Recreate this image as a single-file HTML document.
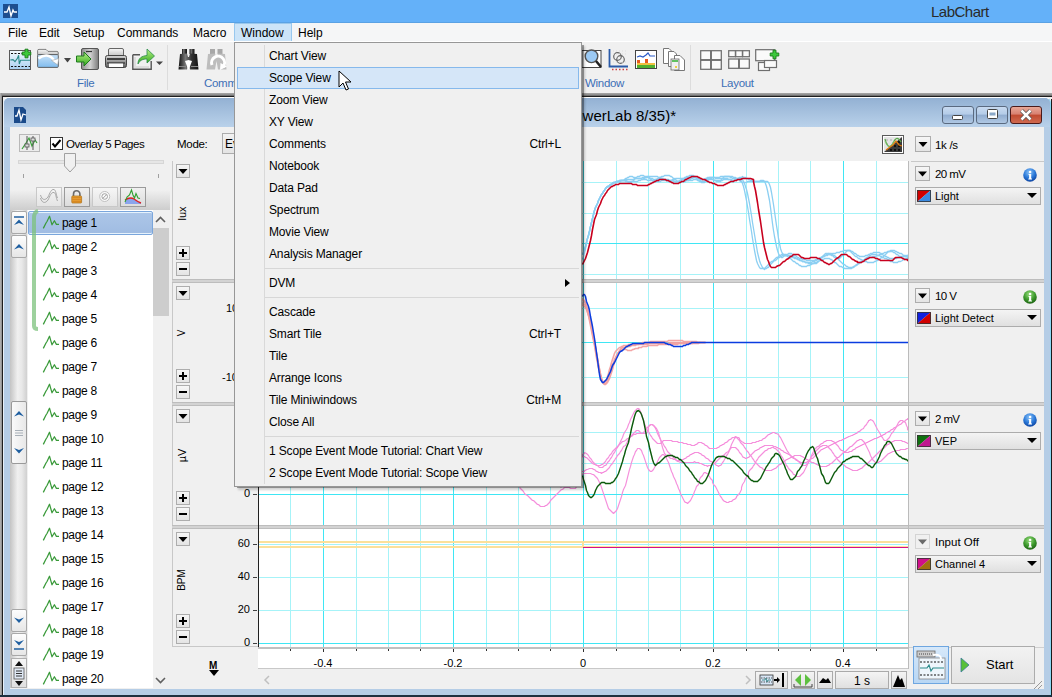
<!DOCTYPE html>
<html><head><meta charset="utf-8">
<style>
*{margin:0;padding:0;box-sizing:border-box}
html,body{width:1052px;height:697px;overflow:hidden;background:#f0f0f0;font-family:"Liberation Sans",sans-serif;font-size:12px;color:#000}
.a{position:absolute}
.t{position:absolute;white-space:nowrap;line-height:1}
svg{position:absolute;overflow:visible}
</style></head><body>
<!-- title bar -->
<div class="a" style="left:0;top:0;width:1052px;height:23px;background:#64b1f9"></div>
<div class="a" style="left:3px;top:4px;width:15px;height:14px;background:#1d4e8f"></div>
<svg style="left:3px;top:4px" width="15" height="14"><path d="M1 8 L4 8 L6 3 L8 12 L10 6 L11 8 L14 8" stroke="#fff" stroke-width="1.3" fill="none"/></svg>
<div class="t" style="left:931px;top:4px;font-size:15px;letter-spacing:-0.5px;color:#2a2a2a">LabChart</div><div class="a" style="left:0;top:22px;width:1052px;height:1px;background:#5aa2e4"></div>
<!-- menu bar -->
<div class="a" style="left:0;top:23px;width:1052px;height:18px;background:#f5f6f7"></div>
<div class="a" style="left:234px;top:23px;width:58px;height:19px;background:#cce4f8;border:1px solid #99c8ee"></div>
<div class="t" style="left:8px;top:27px">File</div>
<div class="t" style="left:39px;top:27px">Edit</div>
<div class="t" style="left:73px;top:27px">Setup</div>
<div class="t" style="left:117px;top:27px">Commands</div>
<div class="t" style="left:193px;top:27px">Macro</div>
<div class="t" style="left:241px;top:27px">Window</div>
<div class="t" style="left:298px;top:27px">Help</div>
<!-- toolbar -->
<div class="a" style="left:0;top:41px;width:1052px;height:52px;background:#f0f0f0;border-top:1px solid #fff"></div>
<div class="a" style="left:167px;top:45px;width:1px;height:45px;background:#dcdcdc"></div>
<div class="a" style="left:690px;top:45px;width:1px;height:45px;background:#dcdcdc"></div>
<div class="t" style="left:77px;top:78px;color:#3d6fb6;font-size:11.5px;letter-spacing:-0.3px">File</div>
<div class="t" style="left:204px;top:78px;color:#3d6fb6;font-size:11.5px;letter-spacing:-0.3px">Commands</div>
<div class="t" style="left:585px;top:78px;color:#3d6fb6;font-size:11.5px;letter-spacing:-0.3px">Window</div>
<div class="t" style="left:721px;top:78px;color:#3d6fb6;font-size:11.5px;letter-spacing:-0.3px">Layout</div>
<!-- MDI border -->
<div class="a" style="left:0;top:93px;width:1052px;height:4px;background:linear-gradient(#a8a8a8 0%,#8a8a8a 50%,#5a5a5a 75%,#1e1e1e 76%)"></div>
<div class="a" style="left:0;top:93px;width:2px;height:604px;background:linear-gradient(90deg,#b8b8b8,#8a8a8a)"></div><div class="a" style="left:2px;top:96px;width:1px;height:601px;background:#1e1e1e"></div>
<div class="a" style="left:1051px;top:99px;width:1px;height:598px;background:#1a1a1a"></div>
<!-- child window frame -->
<div class="a" style="left:3px;top:97px;width:1048px;height:598px;background:#b5cde6;border-top:1px solid #fff;border-left:1px solid #e8f0f8;border-right:1px solid #8ad8f4;border-radius:6px 6px 0 0"></div>
<div class="a" style="left:4px;top:98px;width:1046px;height:29px;background:linear-gradient(#93b1d3,#b9d1ea);border-radius:5px 5px 0 0"></div>
<div class="a" style="left:0;top:695px;width:1052px;height:2px;background:#1d3040"></div>
<div class="a" style="left:10px;top:127px;width:1034px;height:562px;background:#f0f0f0"></div>
<svg style="left:9px;top:49px" width="24" height="21"><defs><linearGradient id="g1" x1="0" y1="0" x2="0" y2="1"><stop offset="0" stop-color="#f4faff"/><stop offset="1" stop-color="#a8d0f0"/></linearGradient></defs>
<rect x=".5" y="1.5" width="21" height="19" fill="url(#g1)" stroke="#5a5a5a"/>
<path d="M2 4.5h12M2 17.5h19" stroke="#111" stroke-dasharray="2 1.5"/>
<path d="M1.3 11 L4 10.6 L6 12.6 L8.3 9.6 L9.6 6.3 L10.3 15 L11.6 11.3 L21 11.3" stroke="#2a8a8a" stroke-width="1.1" fill="none"/>
<path d="M16 0.2 H19 V3 H21.8 V6 H19 V8.8 H16 V6 H13.2 V3 H16 Z" fill="#3cc83c" stroke="#1a7a1a" stroke-width=".9"/></svg>
<svg style="left:37px;top:49px" width="23" height="19"><defs><linearGradient id="g2" x1="0" y1="0" x2="0" y2="1"><stop offset="0" stop-color="#c8e2f8"/><stop offset="1" stop-color="#80bcee"/></linearGradient><linearGradient id="g2b" x1="0" y1="0" x2="0" y2="1"><stop offset="0" stop-color="#f4f4f4"/><stop offset="1" stop-color="#c8c8c8"/></linearGradient></defs>
<path d="M.6 5.6 V1.5 Q.6 .4 2 .4 H9 L11 2.4 H20 Q21.3 2.4 21.3 4 V5.6Z" fill="url(#g2b)" stroke="#666" stroke-width=".8"/>
<rect x=".6" y="5.6" width="20.7" height="12.8" rx="1" fill="url(#g2)" stroke="#555" stroke-width=".9"/>
<path d="M1.5 9.5 C7 5,13 5.5,17 11" stroke="#fff" stroke-width="2.4" fill="none"/><path d="M14.5 11.5 L21.8 9.6 L20.6 15.8Z" fill="#fff" stroke="#999" stroke-width=".5"/></svg>
<svg style="left:64px;top:58px" width="8" height="5"><path d="M0 0H7L3.5 4.5Z" fill="#444"/></svg>
<svg style="left:76px;top:48px" width="23" height="22"><defs><linearGradient id="g3" x1="0" y1="0" x2="1" y2="0"><stop offset="0" stop-color="#8a8a8a"/><stop offset=".5" stop-color="#d4d4d4"/><stop offset="1" stop-color="#7a7a7a"/></linearGradient><linearGradient id="g4" x1="0" y1="0" x2="0" y2="1"><stop offset="0" stop-color="#b8f088"/><stop offset="1" stop-color="#30a818"/></linearGradient></defs>
<rect x="5.5" y=".5" width="17" height="21" rx="1.5" fill="url(#g3)" stroke="#555"/>
<path d="M10 3.5h6" stroke="#333" stroke-width="1.2"/>
<path d="M.5 8 H8 V4 L15 11 L8 18 V14 H.5Z" fill="url(#g4)" stroke="#1e7a1e"/></svg>
<svg style="left:105px;top:48px" width="22" height="21"><defs><linearGradient id="g5" x1="0" y1="0" x2="0" y2="1"><stop offset="0" stop-color="#d8d8d8"/><stop offset=".5" stop-color="#9a9a9a"/><stop offset="1" stop-color="#5a5a5a"/></linearGradient><linearGradient id="g5b" x1="0" y1="0" x2="0" y2="1"><stop offset="0" stop-color="#f8f8f8"/><stop offset="1" stop-color="#c0c0c0"/></linearGradient></defs>
<rect x="3.5" y=".5" width="15" height="8" rx="1.5" fill="url(#g5b)" stroke="#666"/>
<rect x=".5" y="7.5" width="21" height="12" rx="2" fill="url(#g5)" stroke="#444"/>
<path d="M2 11h18" stroke="#222" stroke-width="1.6"/><path d="M2 15h18" stroke="#333" stroke-width="1.2"/>
<rect x="4" y="15.5" width="14" height="3.5" fill="#fff"/></svg>
<svg style="left:132px;top:48px" width="32" height="23"><defs><linearGradient id="g6" x1="0" y1="0" x2="0" y2="1"><stop offset="0" stop-color="#b8f08a"/><stop offset="1" stop-color="#30a818"/></linearGradient></defs>
<path d="M.8 6.8 H8 V6.8 M.8 6.8 V21.2 H19.2 V13" stroke="#555" stroke-width="1.4" fill="none"/><path d="M3 9 V19 H17" stroke="#ddd" stroke-width="2" fill="none"/>
<path d="M6 16 C6 10,10 8,15 7.5 V1 L22.5 8 L15 15 V11 C11 11,8 12,6 16Z" fill="url(#g6)" stroke="#2a8a4a" stroke-width=".8"/>
<path d="M24 13.5H31L27.5 17Z" fill="#444"/></svg>
<svg style="left:178px;top:48px" width="21" height="22"><defs><linearGradient id="g7" x1="0" y1="0" x2="1" y2="0"><stop offset="0" stop-color="#111"/><stop offset=".35" stop-color="#777"/><stop offset=".65" stop-color="#333"/><stop offset="1" stop-color="#111"/></linearGradient></defs>
<rect x="4" y="1" width="5" height="5" fill="url(#g7)"/><rect x="11.5" y="1" width="5" height="5" fill="url(#g7)"/>
<path d="M0.5 21.5 L2 6 L9 5.5 L10 9 L11 9 L12 5.5 L19 6 L20.5 21.5 H12 L10.5 13 L9 21.5Z" fill="url(#g7)"/>
<path d="M7 13 L10.5 12 L14 13 L11 21 H10Z" fill="#fff"/><path d="M1 18.5h7M13 18.5h7" stroke="#888" stroke-width="1"/></svg>
<svg style="left:206px;top:48px" width="22" height="23"><rect x="4" y="1" width="5" height="5" fill="#a8a8a8"/><rect x="11.5" y="1" width="5" height="5" fill="#a8a8a8"/>
<path d="M0.5 21.5 L2 6 L9 5.5 L10 9 L11 9 L12 5.5 L19 6 L20.5 21.5 H12 L10.5 13 L9 21.5Z" fill="#bdbdbd"/>
<path d="M6 17 A6.5 6.5 0 1 1 17 19" stroke="#fff" stroke-width="3" fill="none"/><path d="M14 22 L21 18.5 L14.5 15Z" fill="#fff"/></svg>
<svg style="left:582px;top:50px" width="20" height="20"><rect x="0" y=".5" width="19" height="17" fill="#fff" stroke="#444"/><circle cx="9.5" cy="6.3" r="6.3" fill="#9ccaf4" stroke="#555" stroke-width="1.4"/><path d="M14 11 L19 17" stroke="#222" stroke-width="2.5"/></svg>
<svg style="left:608px;top:48px" width="21" height="23"><path d="M1.5 1 V18.5 H20" stroke="#2a5aa8" stroke-width="1.8" fill="none"/><path d="M4 21.5h16" stroke="#d04040" stroke-dasharray="1.5 2" stroke-width="1.5"/>
<circle cx="9.5" cy="8.5" r="3.8" fill="none" stroke="#666" stroke-width="1.2"/><circle cx="12.5" cy="11.5" r="3.8" fill="none" stroke="#666" stroke-width="1.2"/>
<path d="M5 3h14M5 6h14M5 14h14" stroke="#ddd" stroke-dasharray="1 2"/></svg>
<svg style="left:635px;top:50px" width="22" height="19"><rect x=".5" y=".5" width="21" height="18" fill="#fff" stroke="#444"/>
<path d="M2 7 L5 6 L8 7 L11 5 L13 3 L15 6 L20 6" stroke="#2a5ac8" stroke-width="1.2" fill="none"/>
<rect x="2" y="10" width="3" height="3" fill="#e85a20"/><rect x="10" y="9" width="3" height="4" fill="#e85a20"/><rect x="2" y="13" width="18" height="2" fill="#f0c040"/><rect x="2" y="15" width="18" height="3" fill="#50b030"/></svg>
<svg style="left:663px;top:48px" width="23" height="23"><path d="M.5 .5 H6 L8.5 3 V15.5 H.5Z" fill="#fff" stroke="#777"/><path d="M5.5 3.5 H11 L13.5 6 V18.5 H5.5Z" fill="#fff" stroke="#777"/><path d="M11.5 7.5 H17 L21.5 12 V22.5 H11.5Z" fill="#fff" stroke="#777"/>
<rect x="8" y="11" width="8" height="11" fill="#f0f0f0" stroke="#666" stroke-width=".8"/><rect x="9" y="12" width="6" height="2" fill="#60c060"/><rect x="12" y="18" width="2" height="2" fill="#f0d040"/></svg>
<svg style="left:700px;top:50px" width="22" height="20"><g fill="#fafafa" stroke="#6e6e6e" stroke-width="1.25"><rect x=".7" y=".7" width="10" height="9"/><rect x="11.3" y=".7" width="10" height="9"/><rect x=".7" y="10.3" width="10" height="9"/><rect x="11.3" y="10.3" width="10" height="9"/></g></svg>
<svg style="left:728px;top:50px" width="22" height="19"><g fill="#fafafa" stroke="#6e6e6e" stroke-width="1.25"><rect x=".7" y=".7" width="6.7" height="6"/><rect x="7.7" y=".7" width="6.7" height="6"/><rect x="14.7" y=".7" width="6.7" height="6"/><rect x=".7" y="9" width="10" height="9.3"/><rect x="11.3" y="9" width="10" height="9.3"/></g></svg>
<svg style="left:755px;top:49px" width="26" height="22"><g fill="#fafafa" stroke="#6e6e6e" stroke-width="1.2"><rect x=".7" y=".7" width="19" height="11"/><rect x="3.5" y="13.5" width="11" height="8"/><rect x="9.5" y="11.5" width="12" height="7"/></g>
<path d="M18 1.2 H21 V4 H23.8 V7 H21 V9.8 H18 V7 H15.2 V4 H18 Z" fill="#3cc83c" stroke="#1a7a1a" stroke-width=".9"/></svg>
<svg style="left:14px;top:107px" width="12" height="16"><path d="M0 0 H9 L12 3 V16 H0Z" fill="#1a4a8a"/><path d="M1 9 L3 9 L5 3 L7 13 L9 7 L12 8" stroke="#fff" stroke-width="1.3" fill="none"/></svg>
<div class="t" style="right:376px;top:108px;font-size:15px;color:#000">Scope Event Mode Tutorial: Scope View (PowerLab 8/35)*</div>
<div class="a" style="left:942px;top:106px;width:32px;height:18px;border:1px solid #5a6a80;border-radius:3px;background:linear-gradient(#c8daf0 0%,#b4cce8 45%,#90acd0 50%,#b0c8e4 100%)"></div>
<svg style="left:942px;top:106px" width="32" height="18"><rect x="10.5" y="9.5" width="10" height="4" rx="1" fill="#fff" stroke="#444"/></svg>
<div class="a" style="left:976px;top:106px;width:32px;height:18px;border:1px solid #5a6a80;border-radius:3px;background:linear-gradient(#c8daf0 0%,#b4cce8 45%,#90acd0 50%,#b0c8e4 100%)"></div>
<svg style="left:976px;top:106px" width="32" height="18"><rect x="11.5" y="3.5" width="10" height="9" rx="1" fill="#fff" stroke="#444"/><rect x="13.5" y="6.5" width="6" height="3" fill="#8aa8c8"/></svg>
<div class="a" style="left:1010px;top:106px;width:32px;height:18px;border:1px solid #4a1a1a;border-radius:3px;background:linear-gradient(#e8a898 0%,#d88070 45%,#c04a30 50%,#d06a50 100%)"></div>
<svg style="left:1010px;top:106px" width="32" height="18"><path d="M11.5 4.5 L20.5 13.5 M20.5 4.5 L11.5 13.5" stroke="#555" stroke-width="4"/><path d="M11.5 4.5 L20.5 13.5 M20.5 4.5 L11.5 13.5" stroke="#fff" stroke-width="2.5"/></svg><div class="a" style="left:19px;top:134px;width:21px;height:18px;background:#ececec;border:1px solid #b8b8b8"></div>
<svg style="left:19px;top:134px" width="21" height="18"><path d="M3 15 L7 9 L10 4 L13 12 L16 6 L18 9" stroke="#3aa03a" stroke-width="1.2" fill="none"/><path d="M8 2 V16 M14 2 V16" stroke="#555" stroke-width="1"/><rect x="6" y="10" width="4" height="3" fill="#ddd" stroke="#555" stroke-width=".8"/><rect x="12" y="4" width="4" height="3" fill="#ddd" stroke="#555" stroke-width=".8"/></svg>
<div class="a" style="left:50px;top:137px;width:13px;height:13px;background:#fff;border:1px solid #333"></div>
<svg style="left:50px;top:137px" width="13" height="13"><path d="M2.5 6.5 L5 9.5 L10.5 3" stroke="#000" stroke-width="2" fill="none"/></svg>
<div class="t" style="left:66px;top:139px;font-size:11.5px;letter-spacing:-0.45px">Overlay 5 Pages</div>
<div class="a" style="left:18px;top:160px;width:146px;height:4px;background:#e6e6e6;border:1px solid #d6d6d6"></div>
<svg style="left:64px;top:153px" width="13" height="21"><path d="M0.5 0.5 H11.5 V13 L6 19 L0.5 13 Z" fill="#f0f0f0" stroke="#a0a0a0"/></svg>
<div class="a" style="left:23px;top:174px;width:1px;height:4px;background:#a0a0a0"></div>
<div class="a" style="left:158px;top:174px;width:1px;height:4px;background:#a0a0a0"></div>
<div class="a" style="left:10px;top:190px;width:160px;height:20px;background:linear-gradient(#f0f0f0,#cdcdcd)"></div>
<div class="a" style="left:36px;top:187px;width:26px;height:20px;background:linear-gradient(#f6f6f6,#e4e4e4);border:1px solid #c8c8c8"></div>
<div class="a" style="left:64px;top:187px;width:26px;height:20px;background:linear-gradient(#f0f0f0,#dcdcdc);border:1px solid #9a9a9a"></div>
<div class="a" style="left:92px;top:187px;width:26px;height:20px;background:linear-gradient(#f6f6f6,#e4e4e4);border:1px solid #c8c8c8"></div>
<div class="a" style="left:120px;top:187px;width:26px;height:20px;background:linear-gradient(#f0f0f0,#dcdcdc);border:1px solid #9a9a9a"></div>
<svg style="left:36px;top:187px" width="26" height="20"><path d="M4.5 8 C6 13,9 14,12 10 C14 6,15 2,18 2.5 C20 3,20 8,21.5 11" stroke="#a8a8a8" stroke-width="1" fill="none"/><path d="M4.5 11 C6 16,9 17,12 13 C14 9,15 5,18 5.5 C20 6,20 11,21.5 14" stroke="#a8a8a8" stroke-width="1" fill="none"/></svg>
<svg style="left:64px;top:187px" width="26" height="20"><path d="M9.5 9.5 V7 a3.2 3.2 0 0 1 6.4 0 V9.5" stroke="#6a6a6a" stroke-width="1.6" fill="none"/><rect x="7.8" y="9" width="9.8" height="7" rx=".8" fill="#f0a838" stroke="#a86a10" stroke-width=".7"/><path d="M8.3 10.8h8.8M8.3 12.8h8.8M8.3 14.8h8.8" stroke="#c06a10" stroke-width=".7"/></svg>
<svg style="left:92px;top:187px" width="26" height="20"><circle cx="12.7" cy="9.5" r="5" fill="#fafafa" stroke="#c0c0c0" stroke-width="1"/><circle cx="12.7" cy="9.5" r="2.8" fill="none" stroke="#999" stroke-width=".9"/><path d="M11 11.2 L14.4 7.8" stroke="#999" stroke-width=".9"/></svg>
<svg style="left:120px;top:187px" width="26" height="20"><path d="M5 17 V13 C8 11,11 10,14 12 C16 13.5,18 15,21 16 V17Z" fill="#8aa4ec"/><path d="M5 13 C8 11,11 10,14 12 C16 13.5,18 15,21 16" stroke="#e02020" stroke-width="1.4" fill="none"/><path d="M5 15 L7 10 L9.5 8 L11.5 3 L13 8 L14.5 11 L16 6.5 L18 11 L20 11.5" stroke="#30a030" stroke-width="1.1" fill="none"/></svg>
<div class="a" style="left:28px;top:210px;width:125px;height:478px;background:#fff"></div>
<div class="a" style="left:28px;top:211px;width:125px;height:24px;background:linear-gradient(#acc6e8,#a0bce2);border:1px solid #7aa6dc;box-shadow:inset 0 1px 0 #e6f2fc,inset 0 -1px 0 #e6f2fc;border-radius:2px"></div>
<svg style="left:28px;top:208px" width="20" height="125"><path d="M10 3 Q6 4,6 10 V118 Q6 121,10 121" stroke="#7cc27c" stroke-width="4" fill="none" opacity=".75"/></svg>
<svg style="left:43px;top:214px" width="17" height="17"><path d="M0.3 14.4 L3 9 L4 7.5 L6.5 2.2 L9 10.8 L11.4 6.7 L13.4 10.4 L16 10.4" stroke="#3a9a3a" stroke-width="1.25" fill="none" stroke-linejoin="round"/></svg>
<div class="t" style="left:62px;top:217px;font-size:12px;letter-spacing:-0.3px;color:#000">page 1</div>
<svg style="left:43px;top:238px" width="17" height="17"><path d="M0.3 14.4 L3 9 L4 7.5 L6.5 2.2 L9 10.8 L11.4 6.7 L13.4 10.4 L16 10.4" stroke="#3a9a3a" stroke-width="1.25" fill="none" stroke-linejoin="round"/></svg>
<div class="t" style="left:62px;top:241px;font-size:12px;letter-spacing:-0.3px;color:#000">page 2</div>
<svg style="left:43px;top:262px" width="17" height="17"><path d="M0.3 14.4 L3 9 L4 7.5 L6.5 2.2 L9 10.8 L11.4 6.7 L13.4 10.4 L16 10.4" stroke="#3a9a3a" stroke-width="1.25" fill="none" stroke-linejoin="round"/></svg>
<div class="t" style="left:62px;top:265px;font-size:12px;letter-spacing:-0.3px;color:#000">page 3</div>
<svg style="left:43px;top:286px" width="17" height="17"><path d="M0.3 14.4 L3 9 L4 7.5 L6.5 2.2 L9 10.8 L11.4 6.7 L13.4 10.4 L16 10.4" stroke="#3a9a3a" stroke-width="1.25" fill="none" stroke-linejoin="round"/></svg>
<div class="t" style="left:62px;top:289px;font-size:12px;letter-spacing:-0.3px;color:#000">page 4</div>
<svg style="left:43px;top:310px" width="17" height="17"><path d="M0.3 14.4 L3 9 L4 7.5 L6.5 2.2 L9 10.8 L11.4 6.7 L13.4 10.4 L16 10.4" stroke="#3a9a3a" stroke-width="1.25" fill="none" stroke-linejoin="round"/></svg>
<div class="t" style="left:62px;top:313px;font-size:12px;letter-spacing:-0.3px;color:#000">page 5</div>
<svg style="left:43px;top:334px" width="17" height="17"><path d="M0.3 14.4 L3 9 L4 7.5 L6.5 2.2 L9 10.8 L11.4 6.7 L13.4 10.4 L16 10.4" stroke="#3a9a3a" stroke-width="1.25" fill="none" stroke-linejoin="round"/></svg>
<div class="t" style="left:62px;top:337px;font-size:12px;letter-spacing:-0.3px;color:#000">page 6</div>
<svg style="left:43px;top:358px" width="17" height="17"><path d="M0.3 14.4 L3 9 L4 7.5 L6.5 2.2 L9 10.8 L11.4 6.7 L13.4 10.4 L16 10.4" stroke="#3a9a3a" stroke-width="1.25" fill="none" stroke-linejoin="round"/></svg>
<div class="t" style="left:62px;top:361px;font-size:12px;letter-spacing:-0.3px;color:#000">page 7</div>
<svg style="left:43px;top:382px" width="17" height="17"><path d="M0.3 14.4 L3 9 L4 7.5 L6.5 2.2 L9 10.8 L11.4 6.7 L13.4 10.4 L16 10.4" stroke="#3a9a3a" stroke-width="1.25" fill="none" stroke-linejoin="round"/></svg>
<div class="t" style="left:62px;top:385px;font-size:12px;letter-spacing:-0.3px;color:#000">page 8</div>
<svg style="left:43px;top:406px" width="17" height="17"><path d="M0.3 14.4 L3 9 L4 7.5 L6.5 2.2 L9 10.8 L11.4 6.7 L13.4 10.4 L16 10.4" stroke="#3a9a3a" stroke-width="1.25" fill="none" stroke-linejoin="round"/></svg>
<div class="t" style="left:62px;top:409px;font-size:12px;letter-spacing:-0.3px;color:#000">page 9</div>
<svg style="left:43px;top:430px" width="17" height="17"><path d="M0.3 14.4 L3 9 L4 7.5 L6.5 2.2 L9 10.8 L11.4 6.7 L13.4 10.4 L16 10.4" stroke="#3a9a3a" stroke-width="1.25" fill="none" stroke-linejoin="round"/></svg>
<div class="t" style="left:62px;top:433px;font-size:12px;letter-spacing:-0.3px;color:#000">page 10</div>
<svg style="left:43px;top:454px" width="17" height="17"><path d="M0.3 14.4 L3 9 L4 7.5 L6.5 2.2 L9 10.8 L11.4 6.7 L13.4 10.4 L16 10.4" stroke="#3a9a3a" stroke-width="1.25" fill="none" stroke-linejoin="round"/></svg>
<div class="t" style="left:62px;top:457px;font-size:12px;letter-spacing:-0.3px;color:#000">page 11</div>
<svg style="left:43px;top:478px" width="17" height="17"><path d="M0.3 14.4 L3 9 L4 7.5 L6.5 2.2 L9 10.8 L11.4 6.7 L13.4 10.4 L16 10.4" stroke="#3a9a3a" stroke-width="1.25" fill="none" stroke-linejoin="round"/></svg>
<div class="t" style="left:62px;top:481px;font-size:12px;letter-spacing:-0.3px;color:#000">page 12</div>
<svg style="left:43px;top:502px" width="17" height="17"><path d="M0.3 14.4 L3 9 L4 7.5 L6.5 2.2 L9 10.8 L11.4 6.7 L13.4 10.4 L16 10.4" stroke="#3a9a3a" stroke-width="1.25" fill="none" stroke-linejoin="round"/></svg>
<div class="t" style="left:62px;top:505px;font-size:12px;letter-spacing:-0.3px;color:#000">page 13</div>
<svg style="left:43px;top:526px" width="17" height="17"><path d="M0.3 14.4 L3 9 L4 7.5 L6.5 2.2 L9 10.8 L11.4 6.7 L13.4 10.4 L16 10.4" stroke="#3a9a3a" stroke-width="1.25" fill="none" stroke-linejoin="round"/></svg>
<div class="t" style="left:62px;top:529px;font-size:12px;letter-spacing:-0.3px;color:#000">page 14</div>
<svg style="left:43px;top:550px" width="17" height="17"><path d="M0.3 14.4 L3 9 L4 7.5 L6.5 2.2 L9 10.8 L11.4 6.7 L13.4 10.4 L16 10.4" stroke="#3a9a3a" stroke-width="1.25" fill="none" stroke-linejoin="round"/></svg>
<div class="t" style="left:62px;top:553px;font-size:12px;letter-spacing:-0.3px;color:#000">page 15</div>
<svg style="left:43px;top:574px" width="17" height="17"><path d="M0.3 14.4 L3 9 L4 7.5 L6.5 2.2 L9 10.8 L11.4 6.7 L13.4 10.4 L16 10.4" stroke="#3a9a3a" stroke-width="1.25" fill="none" stroke-linejoin="round"/></svg>
<div class="t" style="left:62px;top:577px;font-size:12px;letter-spacing:-0.3px;color:#000">page 16</div>
<svg style="left:43px;top:598px" width="17" height="17"><path d="M0.3 14.4 L3 9 L4 7.5 L6.5 2.2 L9 10.8 L11.4 6.7 L13.4 10.4 L16 10.4" stroke="#3a9a3a" stroke-width="1.25" fill="none" stroke-linejoin="round"/></svg>
<div class="t" style="left:62px;top:601px;font-size:12px;letter-spacing:-0.3px;color:#000">page 17</div>
<svg style="left:43px;top:622px" width="17" height="17"><path d="M0.3 14.4 L3 9 L4 7.5 L6.5 2.2 L9 10.8 L11.4 6.7 L13.4 10.4 L16 10.4" stroke="#3a9a3a" stroke-width="1.25" fill="none" stroke-linejoin="round"/></svg>
<div class="t" style="left:62px;top:625px;font-size:12px;letter-spacing:-0.3px;color:#000">page 18</div>
<svg style="left:43px;top:646px" width="17" height="17"><path d="M0.3 14.4 L3 9 L4 7.5 L6.5 2.2 L9 10.8 L11.4 6.7 L13.4 10.4 L16 10.4" stroke="#3a9a3a" stroke-width="1.25" fill="none" stroke-linejoin="round"/></svg>
<div class="t" style="left:62px;top:649px;font-size:12px;letter-spacing:-0.3px;color:#000">page 19</div>
<svg style="left:43px;top:670px" width="17" height="17"><path d="M0.3 14.4 L3 9 L4 7.5 L6.5 2.2 L9 10.8 L11.4 6.7 L13.4 10.4 L16 10.4" stroke="#3a9a3a" stroke-width="1.25" fill="none" stroke-linejoin="round"/></svg>
<div class="t" style="left:62px;top:673px;font-size:12px;letter-spacing:-0.3px;color:#000">page 20</div>
<div class="a" style="left:153px;top:210px;width:17px;height:478px;background:#f0f0f0"></div>
<div class="a" style="left:153px;top:228px;width:16px;height:88px;background:#cdcdcd"></div>
<svg style="left:152px;top:214px" width="17" height="12"><path d="M4 8 L8.5 3.5 L13 8" stroke="#606060" stroke-width="1.6" fill="none"/></svg>
<svg style="left:152px;top:674px" width="17" height="12"><path d="M4 4 L8.5 8.5 L13 4" stroke="#606060" stroke-width="1.6" fill="none"/></svg>
<div class="a" style="left:10px;top:210px;width:17px;height:478px;background:linear-gradient(90deg,#c4c4c4,#f0f0f0 45%,#e8e8e8 70%,#d0d0d0)"></div>
<div class="a" style="left:11px;top:211px;width:16px;height:23px;background:linear-gradient(#fdfdfd,#e6e6e6);border:1px solid #a8a8a8;border-radius:2px"></div>
<svg style="left:11px;top:211px" width="16" height="23"><path d="M3 6h10" stroke="#1f5fa0" stroke-width="1.5"/><path d="M3 14 L8 8.5 L13 14 L8 12Z" fill="#1f5fa0"/></svg>
<div class="a" style="left:11px;top:235px;width:16px;height:23px;background:linear-gradient(#fdfdfd,#e6e6e6);border:1px solid #a8a8a8;border-radius:2px"></div>
<svg style="left:11px;top:235px" width="16" height="23"><path d="M3 14.5 L8 9.0 L13 14.5 L8 12.5Z" fill="#1f5fa0"/></svg>
<div class="a" style="left:11px;top:401px;width:16px;height:63px;background:linear-gradient(90deg,#fafafa,#e8e8e8);border:1px solid #9a9a9a;border-radius:2px"></div>
<svg style="left:11px;top:401px" width="16" height="63"><path d="M3 15.5 L8 10 L13 15.5 L8 13.5Z" fill="#1f5fa0"/><path d="M4 29.5h8M4 32h8M4 34.5h8" stroke="#a8b0b8" stroke-width="1"/><path d="M3 47 L8 52.5 L13 47 L8 49Z" fill="#1f5fa0"/></svg>
<div class="a" style="left:11px;top:609px;width:16px;height:23px;background:linear-gradient(#fdfdfd,#e6e6e6);border:1px solid #a8a8a8;border-radius:2px"></div>
<svg style="left:11px;top:609px" width="16" height="23"><path d="M3 8.5 L8 14.0 L13 8.5 L8 10.5Z" fill="#1f5fa0"/></svg>
<div class="a" style="left:11px;top:633px;width:16px;height:23px;background:linear-gradient(#fdfdfd,#e6e6e6);border:1px solid #a8a8a8;border-radius:2px"></div>
<svg style="left:11px;top:633px" width="16" height="23"><path d="M3 7 L8 12.5 L13 7 L8 9Z" fill="#1f5fa0"/><path d="M3 16h10" stroke="#1f5fa0" stroke-width="1.5"/></svg>
<div class="a" style="left:11px;top:658px;width:16px;height:30px;background:linear-gradient(#f6f6f6,#e0e0e0);border:1px solid #b0b0b0"></div>
<svg style="left:11px;top:658px" width="16" height="31"><path d="M4 8 L8 3 L12 8Z M4 23 L8 28 L12 23Z" fill="#111"/><rect x="3" y="10" width="10" height="11" fill="#dfe8f4" stroke="#555" stroke-width=".8"/><path d="M5 13h6M5 15.5h6M5 18h6" stroke="#333" stroke-width="1"/></svg>
<div class="a" style="left:172px;top:161px;width:1px;height:486px;background:#a0a0a0"></div>
<div class="t" style="left:177px;top:139px;font-size:11.5px;letter-spacing:-0.3px">Mode:</div>
<div class="a" style="left:222px;top:133px;width:40px;height:21px;background:linear-gradient(#f2f2f2,#e4e4e4);border:1px solid #acacac"></div>
<div class="t" style="left:225px;top:138px;font-size:12px">Event Mode</div><svg style="left:0;top:0" width="1052" height="697" shape-rendering="crispEdges">
<rect x="258" y="161" width="650" height="118" fill="#fff"/>
<line x1="290.5" y1="161" x2="290.5" y2="279" stroke="#a6f3f8" stroke-width="1"/>
<line x1="323.5" y1="161" x2="323.5" y2="279" stroke="#3fe6f4" stroke-width="1"/>
<line x1="356.5" y1="161" x2="356.5" y2="279" stroke="#a6f3f8" stroke-width="1"/>
<line x1="388.5" y1="161" x2="388.5" y2="279" stroke="#a6f3f8" stroke-width="1"/>
<line x1="420.5" y1="161" x2="420.5" y2="279" stroke="#a6f3f8" stroke-width="1"/>
<line x1="453.5" y1="161" x2="453.5" y2="279" stroke="#3fe6f4" stroke-width="1"/>
<line x1="486.5" y1="161" x2="486.5" y2="279" stroke="#a6f3f8" stroke-width="1"/>
<line x1="518.5" y1="161" x2="518.5" y2="279" stroke="#a6f3f8" stroke-width="1"/>
<line x1="550.5" y1="161" x2="550.5" y2="279" stroke="#a6f3f8" stroke-width="1"/>
<line x1="583.5" y1="161" x2="583.5" y2="279" stroke="#3fe6f4" stroke-width="1"/>
<line x1="616.5" y1="161" x2="616.5" y2="279" stroke="#a6f3f8" stroke-width="1"/>
<line x1="648.5" y1="161" x2="648.5" y2="279" stroke="#a6f3f8" stroke-width="1"/>
<line x1="680.5" y1="161" x2="680.5" y2="279" stroke="#a6f3f8" stroke-width="1"/>
<line x1="713.5" y1="161" x2="713.5" y2="279" stroke="#3fe6f4" stroke-width="1"/>
<line x1="746.5" y1="161" x2="746.5" y2="279" stroke="#a6f3f8" stroke-width="1"/>
<line x1="778.5" y1="161" x2="778.5" y2="279" stroke="#a6f3f8" stroke-width="1"/>
<line x1="810.5" y1="161" x2="810.5" y2="279" stroke="#a6f3f8" stroke-width="1"/>
<line x1="843.5" y1="161" x2="843.5" y2="279" stroke="#3fe6f4" stroke-width="1"/>
<line x1="876.5" y1="161" x2="876.5" y2="279" stroke="#a6f3f8" stroke-width="1"/>
<line x1="258" y1="182.5" x2="908" y2="182.5" stroke="#a6f3f8" stroke-width="1"/>
<line x1="258" y1="213.5" x2="908" y2="213.5" stroke="#a6f3f8" stroke-width="1"/>
<line x1="258" y1="243.5" x2="908" y2="243.5" stroke="#3fe6f4" stroke-width="1"/>
<line x1="258" y1="274.5" x2="908" y2="274.5" stroke="#a6f3f8" stroke-width="1"/>
<rect x="258" y="283" width="650" height="119" fill="#fff"/>
<line x1="290.5" y1="283" x2="290.5" y2="402" stroke="#a6f3f8" stroke-width="1"/>
<line x1="323.5" y1="283" x2="323.5" y2="402" stroke="#3fe6f4" stroke-width="1"/>
<line x1="356.5" y1="283" x2="356.5" y2="402" stroke="#a6f3f8" stroke-width="1"/>
<line x1="388.5" y1="283" x2="388.5" y2="402" stroke="#a6f3f8" stroke-width="1"/>
<line x1="420.5" y1="283" x2="420.5" y2="402" stroke="#a6f3f8" stroke-width="1"/>
<line x1="453.5" y1="283" x2="453.5" y2="402" stroke="#3fe6f4" stroke-width="1"/>
<line x1="486.5" y1="283" x2="486.5" y2="402" stroke="#a6f3f8" stroke-width="1"/>
<line x1="518.5" y1="283" x2="518.5" y2="402" stroke="#a6f3f8" stroke-width="1"/>
<line x1="550.5" y1="283" x2="550.5" y2="402" stroke="#a6f3f8" stroke-width="1"/>
<line x1="583.5" y1="283" x2="583.5" y2="402" stroke="#3fe6f4" stroke-width="1"/>
<line x1="616.5" y1="283" x2="616.5" y2="402" stroke="#a6f3f8" stroke-width="1"/>
<line x1="648.5" y1="283" x2="648.5" y2="402" stroke="#a6f3f8" stroke-width="1"/>
<line x1="680.5" y1="283" x2="680.5" y2="402" stroke="#a6f3f8" stroke-width="1"/>
<line x1="713.5" y1="283" x2="713.5" y2="402" stroke="#3fe6f4" stroke-width="1"/>
<line x1="746.5" y1="283" x2="746.5" y2="402" stroke="#a6f3f8" stroke-width="1"/>
<line x1="778.5" y1="283" x2="778.5" y2="402" stroke="#a6f3f8" stroke-width="1"/>
<line x1="810.5" y1="283" x2="810.5" y2="402" stroke="#a6f3f8" stroke-width="1"/>
<line x1="843.5" y1="283" x2="843.5" y2="402" stroke="#3fe6f4" stroke-width="1"/>
<line x1="876.5" y1="283" x2="876.5" y2="402" stroke="#a6f3f8" stroke-width="1"/>
<line x1="258" y1="308.5" x2="908" y2="308.5" stroke="#a6f3f8" stroke-width="1"/>
<line x1="258" y1="342.5" x2="908" y2="342.5" stroke="#3fe6f4" stroke-width="1"/>
<line x1="258" y1="377.5" x2="908" y2="377.5" stroke="#a6f3f8" stroke-width="1"/>
<rect x="258" y="406" width="650" height="119" fill="#fff"/>
<line x1="290.5" y1="406" x2="290.5" y2="525" stroke="#a6f3f8" stroke-width="1"/>
<line x1="323.5" y1="406" x2="323.5" y2="525" stroke="#3fe6f4" stroke-width="1"/>
<line x1="356.5" y1="406" x2="356.5" y2="525" stroke="#a6f3f8" stroke-width="1"/>
<line x1="388.5" y1="406" x2="388.5" y2="525" stroke="#a6f3f8" stroke-width="1"/>
<line x1="420.5" y1="406" x2="420.5" y2="525" stroke="#a6f3f8" stroke-width="1"/>
<line x1="453.5" y1="406" x2="453.5" y2="525" stroke="#3fe6f4" stroke-width="1"/>
<line x1="486.5" y1="406" x2="486.5" y2="525" stroke="#a6f3f8" stroke-width="1"/>
<line x1="518.5" y1="406" x2="518.5" y2="525" stroke="#a6f3f8" stroke-width="1"/>
<line x1="550.5" y1="406" x2="550.5" y2="525" stroke="#a6f3f8" stroke-width="1"/>
<line x1="583.5" y1="406" x2="583.5" y2="525" stroke="#3fe6f4" stroke-width="1"/>
<line x1="616.5" y1="406" x2="616.5" y2="525" stroke="#a6f3f8" stroke-width="1"/>
<line x1="648.5" y1="406" x2="648.5" y2="525" stroke="#a6f3f8" stroke-width="1"/>
<line x1="680.5" y1="406" x2="680.5" y2="525" stroke="#a6f3f8" stroke-width="1"/>
<line x1="713.5" y1="406" x2="713.5" y2="525" stroke="#3fe6f4" stroke-width="1"/>
<line x1="746.5" y1="406" x2="746.5" y2="525" stroke="#a6f3f8" stroke-width="1"/>
<line x1="778.5" y1="406" x2="778.5" y2="525" stroke="#a6f3f8" stroke-width="1"/>
<line x1="810.5" y1="406" x2="810.5" y2="525" stroke="#a6f3f8" stroke-width="1"/>
<line x1="843.5" y1="406" x2="843.5" y2="525" stroke="#3fe6f4" stroke-width="1"/>
<line x1="876.5" y1="406" x2="876.5" y2="525" stroke="#a6f3f8" stroke-width="1"/>
<line x1="258" y1="432.5" x2="908" y2="432.5" stroke="#a6f3f8" stroke-width="1"/>
<line x1="258" y1="463.5" x2="908" y2="463.5" stroke="#a6f3f8" stroke-width="1"/>
<line x1="258" y1="494.5" x2="908" y2="494.5" stroke="#3fe6f4" stroke-width="1"/>
<rect x="258" y="529" width="650" height="118" fill="#fff"/>
<line x1="290.5" y1="529" x2="290.5" y2="647" stroke="#a6f3f8" stroke-width="1"/>
<line x1="323.5" y1="529" x2="323.5" y2="647" stroke="#3fe6f4" stroke-width="1"/>
<line x1="356.5" y1="529" x2="356.5" y2="647" stroke="#a6f3f8" stroke-width="1"/>
<line x1="388.5" y1="529" x2="388.5" y2="647" stroke="#a6f3f8" stroke-width="1"/>
<line x1="420.5" y1="529" x2="420.5" y2="647" stroke="#a6f3f8" stroke-width="1"/>
<line x1="453.5" y1="529" x2="453.5" y2="647" stroke="#3fe6f4" stroke-width="1"/>
<line x1="486.5" y1="529" x2="486.5" y2="647" stroke="#a6f3f8" stroke-width="1"/>
<line x1="518.5" y1="529" x2="518.5" y2="647" stroke="#a6f3f8" stroke-width="1"/>
<line x1="550.5" y1="529" x2="550.5" y2="647" stroke="#a6f3f8" stroke-width="1"/>
<line x1="583.5" y1="529" x2="583.5" y2="647" stroke="#3fe6f4" stroke-width="1"/>
<line x1="616.5" y1="529" x2="616.5" y2="647" stroke="#a6f3f8" stroke-width="1"/>
<line x1="648.5" y1="529" x2="648.5" y2="647" stroke="#a6f3f8" stroke-width="1"/>
<line x1="680.5" y1="529" x2="680.5" y2="647" stroke="#a6f3f8" stroke-width="1"/>
<line x1="713.5" y1="529" x2="713.5" y2="647" stroke="#3fe6f4" stroke-width="1"/>
<line x1="746.5" y1="529" x2="746.5" y2="647" stroke="#a6f3f8" stroke-width="1"/>
<line x1="778.5" y1="529" x2="778.5" y2="647" stroke="#a6f3f8" stroke-width="1"/>
<line x1="810.5" y1="529" x2="810.5" y2="647" stroke="#a6f3f8" stroke-width="1"/>
<line x1="843.5" y1="529" x2="843.5" y2="647" stroke="#3fe6f4" stroke-width="1"/>
<line x1="876.5" y1="529" x2="876.5" y2="647" stroke="#a6f3f8" stroke-width="1"/>
<line x1="258" y1="544.5" x2="908" y2="544.5" stroke="#a6f3f8" stroke-width="1"/>
<line x1="258" y1="577.5" x2="908" y2="577.5" stroke="#a6f3f8" stroke-width="1"/>
<line x1="258" y1="610.5" x2="908" y2="610.5" stroke="#a6f3f8" stroke-width="1"/>
<line x1="258" y1="643.5" x2="908" y2="643.5" stroke="#3fe6f4" stroke-width="1"/>
<rect x="172" y="279" width="872" height="4" fill="#d3d3d3"/>
<rect x="172" y="279" width="872" height="1" fill="#bdbdbd"/>
<rect x="172" y="282" width="872" height="1" fill="#bdbdbd"/>
<rect x="172" y="402" width="872" height="4" fill="#d3d3d3"/>
<rect x="172" y="402" width="872" height="1" fill="#bdbdbd"/>
<rect x="172" y="405" width="872" height="1" fill="#bdbdbd"/>
<rect x="172" y="525" width="872" height="4" fill="#d3d3d3"/>
<rect x="172" y="525" width="872" height="1" fill="#bdbdbd"/>
<rect x="172" y="528" width="872" height="1" fill="#bdbdbd"/>
<rect x="258" y="161" width="1" height="486" fill="#202020"/>
<rect x="258" y="647" width="651" height="2" fill="#c0c0c0"/>
<rect x="258" y="649" width="651" height="19" fill="#fff"/>
<rect x="258" y="668" width="651" height="1" fill="#c8c8c8"/>
<rect x="290" y="649" width="1" height="2" fill="#303030"/>
<rect x="323" y="649" width="1" height="3" fill="#303030"/>
<rect x="356" y="649" width="1" height="2" fill="#303030"/>
<rect x="388" y="649" width="1" height="2" fill="#303030"/>
<rect x="420" y="649" width="1" height="2" fill="#303030"/>
<rect x="453" y="649" width="1" height="3" fill="#303030"/>
<rect x="486" y="649" width="1" height="2" fill="#303030"/>
<rect x="518" y="649" width="1" height="2" fill="#303030"/>
<rect x="550" y="649" width="1" height="2" fill="#303030"/>
<rect x="583" y="649" width="1" height="3" fill="#303030"/>
<rect x="616" y="649" width="1" height="2" fill="#303030"/>
<rect x="648" y="649" width="1" height="2" fill="#303030"/>
<rect x="680" y="649" width="1" height="2" fill="#303030"/>
<rect x="713" y="649" width="1" height="3" fill="#303030"/>
<rect x="746" y="649" width="1" height="2" fill="#303030"/>
<rect x="778" y="649" width="1" height="2" fill="#303030"/>
<rect x="810" y="649" width="1" height="2" fill="#303030"/>
<rect x="843" y="649" width="1" height="3" fill="#303030"/>
<rect x="876" y="649" width="1" height="2" fill="#303030"/>
<rect x="908" y="161" width="1" height="508" fill="#bbbbbb"/>
</svg>
<svg style="left:0;top:0" width="1052" height="697">
<defs><clipPath id="c1"><rect x="259" y="161" width="649" height="117"/></clipPath><clipPath id="c2"><rect x="259" y="283" width="649" height="118"/></clipPath><clipPath id="c3"><rect x="259" y="406" width="649" height="119"/></clipPath><clipPath id="c4"><rect x="259" y="529" width="649" height="118"/></clipPath></defs>
<g clip-path="url(#c1)">
<path d="M582.5 254.5 L583.5 252.5 L584.5 249.5 L585.5 246.5 L586.5 242.5 L587.5 238.5 L588.5 235.5 L589.5 231.5 L590.5 226.5 L591.5 222.5 L592.5 218.5 L593.5 214.5 L594.5 210.5 L595.5 207.5 L596.5 205.5 L597.5 203.5 L598.5 200.5 L599.5 198.5 L600.5 196.5 L601.5 194.5 L602.5 193.5 L603.5 191.5 L604.5 190.5 L605.5 188.5 L606.5 187.5 L607.5 186.5 L608.5 186.5 L609.5 185.5 L610.5 184.5 L611.5 184.5 L612.5 183.5 L613.5 182.5 L614.5 182.5 L615.5 182.5 L616.5 181.5 L617.5 181.5 L618.5 181.5 L619.5 180.5 L620.5 180.5 L621.5 180.5 L622.5 180.5 L623.5 180.5 L624.5 180.5 L625.5 180.5 L626.5 180.5 L627.5 181.5 L628.5 181.5 L629.5 181.5 L630.5 181.5 L631.5 181.5 L632.5 181.5 L633.5 181.5 L634.5 181.5 L635.5 181.5 L636.5 181.5 L637.5 181.5 L638.5 180.5 L639.5 180.5 L640.5 180.5 L641.5 179.5 L642.5 179.5 L643.5 178.5 L644.5 178.5 L645.5 177.5 L646.5 177.5 L647.5 177.5 L648.5 177.5 L649.5 177.5 L650.5 178.5 L651.5 178.5 L652.5 178.5 L653.5 179.5 L654.5 179.5 L655.5 179.5 L656.5 179.5 L657.5 179.5 L658.5 179.5 L659.5 178.5 L660.5 178.5 L661.5 178.5 L662.5 178.5 L663.5 179.5 L664.5 179.5 L665.5 179.5 L666.5 179.5 L667.5 179.5 L668.5 179.5 L669.5 180.5 L670.5 180.5 L671.5 180.5 L672.5 180.5 L673.5 180.5 L674.5 181.5 L675.5 181.5 L676.5 181.5 L677.5 181.5 L678.5 181.5 L679.5 180.5 L680.5 180.5 L681.5 179.5 L682.5 178.5 L683.5 178.5 L684.5 177.5 L685.5 177.5 L686.5 176.5 L687.5 176.5 L688.5 176.5 L689.5 175.5 L690.5 175.5 L691.5 175.5 L692.5 175.5 L693.5 175.5 L694.5 176.5 L695.5 176.5 L696.5 177.5 L697.5 178.5 L698.5 178.5 L699.5 179.5 L700.5 180.5 L701.5 181.5 L702.5 181.5 L703.5 181.5 L704.5 181.5 L705.5 180.5 L706.5 180.5 L707.5 179.5 L708.5 179.5 L709.5 178.5 L710.5 178.5 L711.5 178.5 L712.5 179.5 L713.5 179.5 L714.5 180.5 L715.5 180.5 L716.5 180.5 L717.5 180.5 L718.5 180.5 L719.5 180.5 L720.5 180.5 L721.5 179.5 L722.5 178.5 L723.5 177.5 L724.5 176.5 L725.5 176.5 L726.5 176.5 L727.5 176.5 L728.5 176.5 L729.5 176.5 L730.5 177.5 L731.5 177.5 L732.5 178.5 L733.5 178.5 L734.5 178.5 L735.5 178.5 L736.5 178.5 L737.5 178.5 L738.5 178.5 L739.5 178.5 L740.5 179.5 L741.5 181.5 L742.5 183.5 L743.5 186.5 L744.5 190.5 L745.5 195.5 L746.5 200.5 L747.5 206.5 L748.5 212.5 L749.5 219.5 L750.5 225.5 L751.5 231.5 L752.5 238.5 L753.5 244.5 L754.5 250.5 L755.5 255.5 L756.5 260.5 L757.5 263.5 L758.5 265.5 L759.5 267.5 L760.5 268.5 L761.5 268.5 L762.5 268.5 L763.5 268.5 L764.5 268.5 L765.5 267.5 L766.5 266.5 L767.5 265.5 L768.5 264.5 L769.5 263.5 L770.5 262.5 L771.5 261.5 L772.5 261.5 L773.5 260.5 L774.5 259.5 L775.5 258.5 L776.5 257.5 L777.5 257.5 L778.5 256.5 L779.5 255.5 L780.5 255.5 L781.5 254.5 L782.5 254.5 L783.5 254.5 L784.5 254.5 L785.5 254.5 L786.5 254.5 L787.5 255.5 L788.5 255.5 L789.5 256.5 L790.5 256.5 L791.5 256.5 L792.5 257.5 L793.5 257.5 L794.5 258.5 L795.5 258.5 L796.5 258.5 L797.5 259.5 L798.5 259.5 L799.5 259.5 L800.5 260.5 L801.5 260.5 L802.5 261.5 L803.5 261.5 L804.5 261.5 L805.5 262.5 L806.5 262.5 L807.5 262.5 L808.5 262.5 L809.5 262.5 L810.5 262.5 L811.5 262.5 L812.5 261.5 L813.5 261.5 L814.5 261.5 L815.5 260.5 L816.5 260.5 L817.5 259.5 L818.5 259.5 L819.5 258.5 L820.5 258.5 L821.5 257.5 L822.5 257.5 L823.5 256.5 L824.5 255.5 L825.5 255.5 L826.5 254.5 L827.5 254.5 L828.5 253.5 L829.5 253.5 L830.5 253.5 L831.5 253.5 L832.5 254.5 L833.5 255.5 L834.5 255.5 L835.5 256.5 L836.5 257.5 L837.5 258.5 L838.5 259.5 L839.5 260.5 L840.5 261.5 L841.5 262.5 L842.5 263.5 L843.5 264.5 L844.5 264.5 L845.5 265.5 L846.5 266.5 L847.5 266.5 L848.5 267.5 L849.5 267.5 L850.5 267.5 L851.5 267.5 L852.5 267.5 L853.5 266.5 L854.5 266.5 L855.5 265.5 L856.5 265.5 L857.5 264.5 L858.5 263.5 L859.5 263.5 L860.5 262.5 L861.5 261.5 L862.5 261.5 L863.5 260.5 L864.5 259.5 L865.5 258.5 L866.5 257.5 L867.5 257.5 L868.5 256.5 L869.5 255.5 L870.5 255.5 L871.5 254.5 L872.5 254.5 L873.5 254.5 L874.5 254.5 L875.5 254.5 L876.5 254.5 L877.5 255.5 L878.5 255.5 L879.5 255.5 L880.5 256.5 L881.5 256.5 L882.5 257.5 L883.5 257.5 L884.5 258.5 L885.5 258.5 L886.5 258.5 L887.5 259.5 L888.5 259.5 L889.5 260.5 L890.5 261.5 L891.5 261.5 L892.5 261.5 L893.5 262.5 L894.5 262.5 L895.5 262.5 L896.5 262.5 L897.5 262.5 L898.5 261.5 L899.5 261.5 L900.5 261.5 L902.5 260.5 L903.5 259.5 L904.5 259.5 L905.5 258.5 L906.5 258.5 L907.5 258.5 L907.5 257.5 L908.5 257.5" stroke="#8ccff2" stroke-width="1.3" fill="none" opacity="1" stroke-linejoin="round"/>
<path d="M582.5 259.5 L583.5 256.5 L584.5 252.5 L585.5 248.5 L586.5 243.5 L587.5 238.5 L588.5 234.5 L589.5 230.5 L590.5 226.5 L591.5 222.5 L592.5 218.5 L593.5 214.5 L594.5 210.5 L595.5 207.5 L596.5 205.5 L597.5 203.5 L598.5 200.5 L599.5 198.5 L600.5 196.5 L601.5 194.5 L602.5 193.5 L603.5 191.5 L604.5 190.5 L605.5 188.5 L606.5 187.5 L607.5 186.5 L608.5 186.5 L609.5 185.5 L610.5 184.5 L611.5 184.5 L612.5 183.5 L613.5 182.5 L614.5 182.5 L615.5 182.5 L616.5 181.5 L617.5 181.5 L618.5 181.5 L619.5 180.5 L620.5 180.5 L621.5 180.5 L622.5 180.5 L623.5 180.5 L624.5 180.5 L625.5 181.5 L626.5 181.5 L627.5 181.5 L628.5 182.5 L629.5 182.5 L630.5 182.5 L631.5 181.5 L632.5 181.5 L633.5 180.5 L634.5 179.5 L635.5 178.5 L636.5 177.5 L637.5 176.5 L638.5 176.5 L639.5 176.5 L640.5 175.5 L641.5 175.5 L642.5 175.5 L643.5 175.5 L644.5 176.5 L645.5 176.5 L646.5 176.5 L647.5 176.5 L648.5 177.5 L649.5 178.5 L650.5 179.5 L651.5 179.5 L652.5 180.5 L653.5 181.5 L654.5 181.5 L655.5 181.5 L656.5 181.5 L657.5 181.5 L658.5 181.5 L659.5 181.5 L660.5 181.5 L661.5 180.5 L662.5 180.5 L663.5 180.5 L664.5 180.5 L665.5 180.5 L666.5 180.5 L667.5 180.5 L668.5 180.5 L669.5 180.5 L670.5 180.5 L671.5 180.5 L672.5 179.5 L673.5 179.5 L674.5 179.5 L675.5 178.5 L676.5 178.5 L677.5 178.5 L678.5 178.5 L679.5 178.5 L680.5 178.5 L681.5 178.5 L682.5 178.5 L683.5 179.5 L684.5 179.5 L685.5 179.5 L686.5 179.5 L687.5 180.5 L688.5 180.5 L689.5 180.5 L690.5 180.5 L691.5 180.5 L692.5 180.5 L693.5 179.5 L694.5 179.5 L695.5 179.5 L696.5 179.5 L697.5 180.5 L698.5 180.5 L699.5 180.5 L700.5 180.5 L701.5 179.5 L702.5 179.5 L703.5 179.5 L704.5 179.5 L705.5 178.5 L706.5 178.5 L707.5 177.5 L708.5 177.5 L709.5 177.5 L710.5 177.5 L711.5 177.5 L712.5 177.5 L713.5 177.5 L714.5 177.5 L715.5 178.5 L716.5 178.5 L717.5 178.5 L718.5 178.5 L719.5 178.5 L720.5 178.5 L721.5 178.5 L722.5 178.5 L723.5 178.5 L724.5 178.5 L725.5 178.5 L726.5 178.5 L727.5 178.5 L728.5 179.5 L729.5 179.5 L730.5 179.5 L731.5 180.5 L732.5 180.5 L733.5 180.5 L734.5 180.5 L735.5 180.5 L736.5 180.5 L737.5 179.5 L738.5 178.5 L739.5 178.5 L740.5 178.5 L741.5 179.5 L742.5 179.5 L743.5 181.5 L744.5 183.5 L745.5 186.5 L746.5 189.5 L747.5 193.5 L748.5 198.5 L749.5 203.5 L750.5 209.5 L751.5 215.5 L752.5 222.5 L753.5 228.5 L754.5 234.5 L755.5 240.5 L756.5 246.5 L757.5 252.5 L758.5 256.5 L759.5 260.5 L760.5 263.5 L761.5 265.5 L762.5 267.5 L763.5 268.5 L764.5 269.5 L765.5 268.5 L766.5 268.5 L767.5 267.5 L768.5 267.5 L769.5 265.5 L770.5 264.5 L771.5 263.5 L772.5 262.5 L773.5 261.5 L774.5 260.5 L775.5 260.5 L776.5 259.5 L777.5 258.5 L778.5 257.5 L779.5 257.5 L780.5 256.5 L781.5 256.5 L782.5 255.5 L783.5 255.5 L784.5 255.5 L785.5 255.5 L786.5 255.5 L787.5 255.5 L788.5 255.5 L789.5 255.5 L790.5 255.5 L791.5 255.5 L792.5 256.5 L793.5 256.5 L794.5 257.5 L795.5 257.5 L796.5 258.5 L797.5 258.5 L798.5 259.5 L799.5 260.5 L800.5 260.5 L801.5 260.5 L802.5 261.5 L803.5 261.5 L804.5 261.5 L805.5 262.5 L806.5 262.5 L807.5 262.5 L808.5 263.5 L809.5 263.5 L810.5 263.5 L811.5 263.5 L812.5 263.5 L813.5 263.5 L814.5 263.5 L815.5 263.5 L816.5 263.5 L817.5 262.5 L818.5 261.5 L819.5 260.5 L820.5 258.5 L821.5 257.5 L822.5 256.5 L823.5 255.5 L824.5 254.5 L825.5 253.5 L826.5 253.5 L827.5 253.5 L828.5 253.5 L829.5 254.5 L830.5 254.5 L831.5 255.5 L832.5 255.5 L833.5 256.5 L834.5 257.5 L835.5 257.5 L836.5 258.5 L837.5 258.5 L838.5 258.5 L839.5 258.5 L840.5 257.5 L841.5 256.5 L842.5 255.5 L843.5 254.5 L844.5 253.5 L845.5 252.5 L846.5 251.5 L847.5 250.5 L848.5 250.5 L849.5 250.5 L850.5 250.5 L851.5 251.5 L852.5 251.5 L853.5 252.5 L854.5 253.5 L855.5 253.5 L856.5 254.5 L857.5 255.5 L858.5 255.5 L859.5 256.5 L860.5 256.5 L861.5 256.5 L862.5 256.5 L863.5 256.5 L864.5 256.5 L865.5 255.5 L866.5 255.5 L867.5 255.5 L868.5 254.5 L869.5 254.5 L870.5 253.5 L871.5 253.5 L872.5 253.5 L873.5 252.5 L874.5 252.5 L875.5 252.5 L876.5 252.5 L877.5 252.5 L878.5 252.5 L879.5 252.5 L880.5 253.5 L881.5 253.5 L882.5 254.5 L883.5 255.5 L884.5 255.5 L885.5 256.5 L886.5 256.5 L887.5 257.5 L888.5 257.5 L889.5 258.5 L890.5 258.5 L891.5 258.5 L892.5 258.5 L893.5 258.5 L894.5 258.5 L895.5 258.5 L896.5 258.5 L897.5 257.5 L899.5 257.5 L900.5 257.5 L901.5 257.5 L902.5 256.5 L903.5 256.5 L904.5 256.5 L905.5 256.5 L906.5 255.5 L907.5 255.5 L907.5 255.5 L908.5 255.5" stroke="#8ccff2" stroke-width="1.3" fill="none" opacity="1" stroke-linejoin="round"/>
<path d="M582.5 254.5 L583.5 252.5 L584.5 250.5 L585.5 246.5 L586.5 242.5 L587.5 238.5 L588.5 235.5 L589.5 231.5 L590.5 226.5 L591.5 222.5 L592.5 218.5 L593.5 214.5 L594.5 210.5 L595.5 207.5 L596.5 205.5 L597.5 203.5 L598.5 200.5 L599.5 198.5 L600.5 196.5 L601.5 194.5 L602.5 193.5 L603.5 191.5 L604.5 190.5 L605.5 188.5 L606.5 187.5 L607.5 186.5 L608.5 186.5 L609.5 185.5 L610.5 184.5 L611.5 184.5 L612.5 183.5 L613.5 182.5 L614.5 182.5 L615.5 182.5 L616.5 181.5 L617.5 181.5 L618.5 181.5 L619.5 181.5 L620.5 180.5 L621.5 180.5 L622.5 180.5 L623.5 180.5 L624.5 180.5 L625.5 179.5 L626.5 179.5 L627.5 179.5 L628.5 179.5 L629.5 179.5 L630.5 179.5 L631.5 179.5 L632.5 179.5 L633.5 179.5 L634.5 178.5 L635.5 178.5 L636.5 178.5 L637.5 178.5 L638.5 178.5 L639.5 178.5 L640.5 178.5 L641.5 178.5 L642.5 179.5 L643.5 179.5 L644.5 179.5 L645.5 179.5 L646.5 179.5 L647.5 180.5 L648.5 180.5 L649.5 180.5 L650.5 180.5 L651.5 180.5 L652.5 180.5 L653.5 180.5 L654.5 180.5 L655.5 179.5 L656.5 179.5 L657.5 178.5 L658.5 178.5 L659.5 177.5 L660.5 177.5 L661.5 176.5 L662.5 176.5 L663.5 176.5 L664.5 175.5 L665.5 175.5 L666.5 175.5 L667.5 175.5 L668.5 175.5 L669.5 175.5 L670.5 176.5 L671.5 176.5 L672.5 177.5 L673.5 178.5 L674.5 178.5 L675.5 179.5 L676.5 180.5 L677.5 181.5 L678.5 181.5 L679.5 181.5 L680.5 181.5 L681.5 180.5 L682.5 179.5 L683.5 179.5 L684.5 178.5 L685.5 178.5 L686.5 177.5 L687.5 177.5 L688.5 177.5 L689.5 177.5 L690.5 177.5 L691.5 177.5 L692.5 177.5 L693.5 177.5 L694.5 177.5 L695.5 177.5 L696.5 178.5 L697.5 179.5 L698.5 180.5 L699.5 181.5 L700.5 181.5 L701.5 182.5 L702.5 182.5 L703.5 182.5 L704.5 182.5 L705.5 181.5 L706.5 180.5 L707.5 180.5 L708.5 179.5 L709.5 179.5 L710.5 179.5 L711.5 179.5 L712.5 179.5 L713.5 179.5 L714.5 180.5 L715.5 180.5 L716.5 181.5 L717.5 181.5 L718.5 181.5 L719.5 181.5 L720.5 181.5 L721.5 180.5 L722.5 180.5 L723.5 179.5 L724.5 179.5 L725.5 179.5 L726.5 179.5 L727.5 179.5 L728.5 179.5 L729.5 179.5 L730.5 179.5 L731.5 179.5 L732.5 180.5 L733.5 180.5 L734.5 180.5 L735.5 179.5 L736.5 179.5 L737.5 178.5 L738.5 178.5 L739.5 177.5 L740.5 177.5 L741.5 177.5 L742.5 176.5 L743.5 177.5 L744.5 177.5 L745.5 177.5 L746.5 178.5 L747.5 178.5 L748.5 179.5 L749.5 179.5 L750.5 180.5 L751.5 180.5 L752.5 180.5 L753.5 180.5 L754.5 181.5 L755.5 181.5 L756.5 181.5 L757.5 181.5 L758.5 181.5 L759.5 181.5 L760.5 180.5 L761.5 180.5 L762.5 180.5 L763.5 180.5 L764.5 181.5 L765.5 183.5 L766.5 186.5 L767.5 190.5 L768.5 195.5 L769.5 200.5 L770.5 207.5 L771.5 215.5 L772.5 223.5 L773.5 230.5 L774.5 236.5 L775.5 241.5 L776.5 246.5 L777.5 250.5 L778.5 253.5 L779.5 255.5 L780.5 256.5 L781.5 257.5 L782.5 257.5 L783.5 256.5 L784.5 255.5 L785.5 255.5 L786.5 255.5 L787.5 256.5 L788.5 257.5 L789.5 257.5 L790.5 258.5 L791.5 259.5 L792.5 260.5 L793.5 261.5 L794.5 261.5 L795.5 262.5 L796.5 263.5 L797.5 263.5 L798.5 264.5 L799.5 265.5 L800.5 265.5 L801.5 266.5 L802.5 266.5 L803.5 266.5 L804.5 266.5 L805.5 266.5 L806.5 266.5 L807.5 265.5 L808.5 265.5 L809.5 265.5 L810.5 264.5 L811.5 264.5 L812.5 263.5 L813.5 263.5 L814.5 262.5 L815.5 262.5 L816.5 262.5 L817.5 261.5 L818.5 261.5 L819.5 260.5 L820.5 260.5 L821.5 259.5 L822.5 259.5 L823.5 259.5 L824.5 258.5 L825.5 258.5 L826.5 258.5 L827.5 258.5 L828.5 258.5 L829.5 258.5 L830.5 259.5 L831.5 259.5 L832.5 260.5 L833.5 261.5 L834.5 262.5 L835.5 262.5 L836.5 263.5 L837.5 264.5 L838.5 265.5 L839.5 266.5 L840.5 266.5 L841.5 266.5 L842.5 267.5 L843.5 267.5 L844.5 268.5 L845.5 268.5 L846.5 268.5 L847.5 268.5 L848.5 268.5 L849.5 268.5 L850.5 268.5 L851.5 268.5 L852.5 267.5 L853.5 267.5 L854.5 266.5 L855.5 265.5 L856.5 264.5 L857.5 264.5 L858.5 263.5 L859.5 262.5 L860.5 261.5 L861.5 261.5 L862.5 260.5 L863.5 260.5 L864.5 259.5 L865.5 259.5 L866.5 258.5 L867.5 258.5 L868.5 258.5 L869.5 257.5 L870.5 257.5 L871.5 257.5 L872.5 256.5 L873.5 256.5 L874.5 256.5 L875.5 256.5 L876.5 255.5 L877.5 255.5 L878.5 255.5 L879.5 254.5 L880.5 254.5 L881.5 254.5 L882.5 253.5 L883.5 253.5 L884.5 252.5 L885.5 252.5 L886.5 252.5 L887.5 251.5 L888.5 251.5 L889.5 251.5 L890.5 251.5 L891.5 251.5 L892.5 251.5 L893.5 252.5 L894.5 252.5 L895.5 253.5 L896.5 254.5 L897.5 254.5 L898.5 255.5 L899.5 256.5 L900.5 256.5 L901.5 256.5 L902.5 256.5 L903.5 256.5 L905.5 256.5 L906.5 256.5 L907.5 255.5 L907.5 255.5 L908.5 255.5" stroke="#8ccff2" stroke-width="1.3" fill="none" opacity="1" stroke-linejoin="round"/>
<path d="M582.5 254.5 L583.5 252.5 L584.5 250.5 L585.5 246.5 L586.5 242.5 L587.5 238.5 L588.5 235.5 L589.5 231.5 L590.5 226.5 L591.5 222.5 L592.5 218.5 L593.5 214.5 L594.5 210.5 L595.5 207.5 L596.5 205.5 L597.5 203.5 L598.5 200.5 L599.5 198.5 L600.5 196.5 L601.5 194.5 L602.5 193.5 L603.5 191.5 L604.5 190.5 L605.5 188.5 L606.5 187.5 L607.5 186.5 L608.5 186.5 L609.5 185.5 L610.5 184.5 L611.5 184.5 L612.5 183.5 L613.5 183.5 L614.5 182.5 L615.5 182.5 L616.5 181.5 L617.5 181.5 L618.5 181.5 L619.5 181.5 L620.5 181.5 L621.5 180.5 L622.5 180.5 L623.5 180.5 L624.5 179.5 L625.5 178.5 L626.5 178.5 L627.5 177.5 L628.5 177.5 L629.5 176.5 L630.5 176.5 L631.5 176.5 L632.5 176.5 L633.5 177.5 L634.5 177.5 L635.5 177.5 L636.5 178.5 L637.5 178.5 L638.5 178.5 L639.5 178.5 L640.5 178.5 L641.5 178.5 L642.5 177.5 L643.5 177.5 L644.5 177.5 L645.5 177.5 L646.5 177.5 L647.5 176.5 L648.5 176.5 L649.5 176.5 L650.5 176.5 L651.5 176.5 L652.5 176.5 L653.5 176.5 L654.5 176.5 L655.5 176.5 L656.5 176.5 L657.5 176.5 L658.5 177.5 L659.5 177.5 L660.5 177.5 L661.5 178.5 L662.5 178.5 L663.5 179.5 L664.5 179.5 L665.5 179.5 L666.5 180.5 L667.5 180.5 L668.5 181.5 L669.5 181.5 L670.5 181.5 L671.5 182.5 L672.5 182.5 L673.5 181.5 L674.5 181.5 L675.5 181.5 L676.5 181.5 L677.5 181.5 L678.5 181.5 L679.5 181.5 L680.5 181.5 L681.5 181.5 L682.5 181.5 L683.5 181.5 L684.5 181.5 L685.5 181.5 L686.5 180.5 L687.5 180.5 L688.5 180.5 L689.5 179.5 L690.5 179.5 L691.5 178.5 L692.5 178.5 L693.5 177.5 L694.5 177.5 L695.5 177.5 L696.5 177.5 L697.5 177.5 L698.5 178.5 L699.5 178.5 L700.5 179.5 L701.5 179.5 L702.5 179.5 L703.5 179.5 L704.5 179.5 L705.5 179.5 L706.5 178.5 L707.5 178.5 L708.5 178.5 L709.5 177.5 L710.5 177.5 L711.5 177.5 L712.5 177.5 L713.5 177.5 L714.5 177.5 L715.5 177.5 L716.5 177.5 L717.5 177.5 L718.5 177.5 L719.5 177.5 L720.5 176.5 L721.5 176.5 L722.5 176.5 L723.5 176.5 L724.5 176.5 L725.5 176.5 L726.5 176.5 L727.5 176.5 L728.5 176.5 L729.5 176.5 L730.5 176.5 L731.5 176.5 L732.5 176.5 L733.5 177.5 L734.5 177.5 L735.5 177.5 L736.5 178.5 L737.5 179.5 L738.5 179.5 L739.5 180.5 L740.5 181.5 L741.5 181.5 L742.5 182.5 L743.5 182.5 L744.5 182.5 L745.5 182.5 L746.5 182.5 L747.5 181.5 L748.5 181.5 L749.5 181.5 L750.5 181.5 L751.5 181.5 L752.5 181.5 L753.5 181.5 L754.5 181.5 L755.5 181.5 L756.5 181.5 L757.5 181.5 L758.5 181.5 L759.5 181.5 L760.5 181.5 L761.5 181.5 L762.5 181.5 L764.5 181.5 L765.5 181.5 L765.5 181.5 L766.5 181.5 L766.5 181.5 L766.5 181.5 L767.5 181.5 L768.5 182.5 L769.5 184.5 L770.5 187.5 L771.5 192.5 L772.5 198.5 L773.5 204.5 L774.5 211.5 L775.5 218.5 L776.5 225.5 L777.5 231.5 L778.5 238.5 L779.5 243.5 L780.5 248.5 L781.5 251.5 L782.5 253.5 L783.5 254.5 L784.5 255.5 L785.5 255.5 L786.5 255.5 L787.5 254.5 L788.5 253.5 L789.5 253.5 L790.5 253.5 L791.5 253.5 L792.5 254.5 L793.5 254.5 L794.5 255.5 L795.5 255.5 L796.5 256.5 L797.5 257.5 L798.5 257.5 L799.5 258.5 L800.5 258.5 L801.5 258.5 L802.5 259.5 L803.5 259.5 L804.5 259.5 L805.5 259.5 L806.5 260.5 L807.5 260.5 L808.5 260.5 L809.5 260.5 L810.5 260.5 L811.5 260.5 L812.5 260.5 L813.5 260.5 L814.5 260.5 L815.5 259.5 L816.5 259.5 L817.5 259.5 L818.5 258.5 L819.5 258.5 L820.5 257.5 L821.5 257.5 L822.5 256.5 L823.5 256.5 L824.5 256.5 L825.5 255.5 L826.5 255.5 L827.5 255.5 L828.5 254.5 L829.5 254.5 L830.5 254.5 L831.5 254.5 L832.5 253.5 L833.5 253.5 L834.5 253.5 L835.5 253.5 L836.5 252.5 L837.5 252.5 L838.5 252.5 L839.5 252.5 L840.5 251.5 L841.5 251.5 L842.5 251.5 L843.5 250.5 L844.5 250.5 L845.5 250.5 L846.5 250.5 L847.5 250.5 L848.5 250.5 L849.5 250.5 L850.5 251.5 L851.5 252.5 L852.5 253.5 L853.5 254.5 L854.5 255.5 L855.5 256.5 L856.5 256.5 L857.5 257.5 L858.5 258.5 L859.5 258.5 L860.5 259.5 L861.5 259.5 L862.5 260.5 L863.5 260.5 L864.5 261.5 L865.5 261.5 L866.5 261.5 L867.5 262.5 L868.5 262.5 L869.5 262.5 L870.5 262.5 L871.5 262.5 L872.5 262.5 L873.5 262.5 L874.5 261.5 L875.5 261.5 L876.5 260.5 L877.5 260.5 L878.5 259.5 L879.5 259.5 L880.5 258.5 L881.5 257.5 L882.5 257.5 L883.5 256.5 L884.5 255.5 L885.5 254.5 L886.5 253.5 L887.5 252.5 L888.5 251.5 L889.5 251.5 L890.5 250.5 L891.5 250.5 L892.5 250.5 L893.5 250.5 L894.5 250.5 L895.5 251.5 L896.5 251.5 L897.5 252.5 L898.5 252.5 L899.5 253.5 L900.5 253.5 L901.5 253.5 L902.5 254.5 L903.5 255.5 L905.5 255.5 L906.5 256.5 L907.5 256.5 L907.5 257.5 L908.5 257.5" stroke="#8ccff2" stroke-width="1.3" fill="none" opacity="1" stroke-linejoin="round"/>
<path d="M582.5 264.5 L583.5 262.5 L584.5 260.5 L585.5 258.5 L586.5 255.5 L587.5 252.5 L588.5 248.5 L589.5 244.5 L590.5 240.5 L591.5 235.5 L592.5 229.5 L593.5 224.5 L594.5 219.5 L596.5 214.5 L597.5 210.5 L598.5 207.5 L599.5 205.5 L600.5 203.5 L601.5 200.5 L602.5 198.5 L603.5 196.5 L604.5 195.5 L605.5 193.5 L606.5 192.5 L607.5 190.5 L608.5 189.5 L609.5 188.5 L610.5 187.5 L611.5 186.5 L612.5 186.5 L613.5 185.5 L614.5 185.5 L615.5 184.5 L617.5 184.5 L618.5 184.5 L618.5 184.5 L619.5 183.5 L620.5 183.5 L621.5 183.5 L623.5 183.5 L624.5 183.5 L625.5 183.5 L626.5 183.5 L627.5 183.5 L628.5 183.5 L629.5 183.5 L630.5 183.5 L631.5 183.5 L632.5 184.5 L633.5 184.5 L634.5 184.5 L635.5 184.5 L636.5 184.5 L637.5 185.5 L638.5 185.5 L639.5 185.5 L640.5 185.5 L642.5 185.5 L643.5 185.5 L644.5 185.5 L645.5 185.5 L646.5 185.5 L647.5 185.5 L648.5 184.5 L649.5 184.5 L650.5 183.5 L651.5 183.5 L652.5 182.5 L653.5 182.5 L654.5 181.5 L655.5 181.5 L656.5 180.5 L658.5 180.5 L659.5 179.5 L660.5 179.5 L661.5 179.5 L662.5 179.5 L663.5 179.5 L664.5 179.5 L665.5 179.5 L666.5 180.5 L667.5 180.5 L668.5 180.5 L669.5 181.5 L670.5 181.5 L671.5 182.5 L672.5 182.5 L673.5 183.5 L674.5 183.5 L675.5 183.5 L676.5 183.5 L677.5 183.5 L678.5 183.5 L679.5 182.5 L680.5 182.5 L681.5 181.5 L683.5 181.5 L684.5 180.5 L685.5 179.5 L686.5 179.5 L687.5 178.5 L688.5 178.5 L689.5 177.5 L690.5 177.5 L691.5 176.5 L692.5 176.5 L693.5 176.5 L694.5 176.5 L695.5 176.5 L696.5 176.5 L697.5 176.5 L698.5 177.5 L699.5 177.5 L700.5 178.5 L701.5 178.5 L702.5 179.5 L703.5 179.5 L704.5 179.5 L706.5 180.5 L706.5 180.5 L707.5 181.5 L708.5 181.5 L709.5 182.5 L711.5 182.5 L712.5 183.5 L713.5 183.5 L714.5 183.5 L715.5 184.5 L716.5 184.5 L717.5 185.5 L718.5 185.5 L719.5 185.5 L720.5 185.5 L721.5 185.5 L722.5 185.5 L723.5 185.5 L724.5 184.5 L725.5 184.5 L726.5 183.5 L727.5 183.5 L728.5 182.5 L729.5 182.5 L730.5 181.5 L731.5 181.5 L733.5 181.5 L734.5 180.5 L735.5 180.5 L736.5 180.5 L737.5 179.5 L738.5 179.5 L739.5 179.5 L740.5 179.5 L742.5 178.5 L743.5 178.5 L744.5 178.5 L745.5 178.5 L746.5 178.5 L747.5 178.5 L748.5 178.5 L749.5 178.5 L750.5 178.5 L750.5 178.5 L753.5 179.5 L753.5 181.5 L754.5 186.5 L755.5 190.5 L756.5 196.5 L757.5 202.5 L758.5 209.5 L759.5 215.5 L760.5 221.5 L761.5 228.5 L762.5 235.5 L763.5 242.5 L764.5 247.5 L765.5 251.5 L766.5 255.5 L767.5 259.5 L768.5 261.5 L769.5 264.5 L770.5 266.5 L771.5 267.5 L772.5 267.5 L774.5 267.5 L775.5 267.5 L775.5 267.5 L776.5 266.5 L778.5 265.5 L779.5 265.5 L780.5 264.5 L781.5 263.5 L782.5 262.5 L783.5 261.5 L784.5 261.5 L785.5 260.5 L786.5 259.5 L788.5 258.5 L789.5 257.5 L790.5 256.5 L791.5 256.5 L792.5 255.5 L793.5 254.5 L794.5 254.5 L795.5 254.5 L796.5 254.5 L797.5 254.5 L798.5 254.5 L799.5 255.5 L800.5 256.5 L801.5 257.5 L802.5 257.5 L804.5 258.5 L804.5 258.5 L805.5 258.5 L806.5 258.5 L807.5 258.5 L809.5 258.5 L810.5 257.5 L811.5 257.5 L812.5 257.5 L813.5 257.5 L814.5 257.5 L815.5 257.5 L816.5 257.5 L817.5 258.5 L818.5 258.5 L819.5 258.5 L820.5 259.5 L821.5 260.5 L822.5 260.5 L823.5 261.5 L824.5 262.5 L825.5 262.5 L826.5 263.5 L827.5 263.5 L828.5 264.5 L829.5 264.5 L830.5 263.5 L831.5 263.5 L832.5 262.5 L833.5 261.5 L834.5 260.5 L835.5 259.5 L836.5 258.5 L838.5 257.5 L839.5 256.5 L840.5 255.5 L841.5 254.5 L842.5 254.5 L843.5 254.5 L844.5 254.5 L845.5 254.5 L846.5 254.5 L847.5 255.5 L848.5 256.5 L849.5 256.5 L850.5 257.5 L851.5 258.5 L852.5 259.5 L853.5 259.5 L854.5 260.5 L856.5 261.5 L857.5 261.5 L857.5 262.5 L858.5 262.5 L860.5 262.5 L861.5 262.5 L862.5 261.5 L863.5 261.5 L864.5 260.5 L865.5 259.5 L866.5 259.5 L867.5 258.5 L868.5 258.5 L869.5 257.5 L869.5 257.5 L870.5 257.5 L871.5 257.5 L873.5 257.5 L874.5 257.5 L875.5 258.5 L876.5 258.5 L877.5 258.5 L878.5 259.5 L879.5 259.5 L880.5 260.5 L881.5 260.5 L882.5 260.5 L883.5 260.5 L884.5 260.5 L885.5 260.5 L886.5 260.5 L887.5 260.5 L888.5 260.5 L889.5 260.5 L890.5 260.5 L891.5 260.5 L892.5 260.5 L893.5 259.5 L894.5 258.5 L895.5 257.5 L897.5 257.5 L898.5 257.5 L899.5 257.5 L900.5 257.5 L901.5 257.5 L902.5 258.5 L903.5 258.5 L904.5 259.5 L906.5 259.5 L907.5 259.5 L907.5 260.5 L908.5 260.5" stroke="#c8001e" stroke-width="1.6" fill="none" opacity="1" stroke-linejoin="round"/>
</g>
<g clip-path="url(#c2)">
<path d="M582.5 302.5 L583.5 303.5 L585.5 305.5 L586.5 307.5 L587.5 310.5 L588.5 314.5 L589.5 318.5 L590.5 322.5 L591.5 327.5 L592.5 333.5 L593.5 338.5 L594.5 343.5 L595.5 349.5 L596.5 355.5 L597.5 360.5 L598.5 366.5 L599.5 371.5 L600.5 376.5 L601.5 380.5 L602.5 382.5 L603.5 383.5 L604.5 383.5 L605.5 383.5 L606.5 382.5 L607.5 380.5 L608.5 378.5 L609.5 375.5 L610.5 371.5 L611.5 368.5 L612.5 366.5 L613.5 363.5 L614.5 361.5 L615.5 358.5 L616.5 356.5 L617.5 354.5 L618.5 352.5 L619.5 351.5 L620.5 349.5 L621.5 348.5 L622.5 347.5 L623.5 347.5 L624.5 347.5 L625.5 347.5 L626.5 346.5 L627.5 346.5 L628.5 346.5 L629.5 346.5 L630.5 346.5 L630.5 345.5 L631.5 345.5 L632.5 345.5 L633.5 345.5 L634.5 345.5 L635.5 345.5 L636.5 344.5 L637.5 344.5 L639.5 344.5 L640.5 344.5 L641.5 344.5 L642.5 344.5 L643.5 344.5 L643.5 344.5 L644.5 344.5 L645.5 344.5 L646.5 344.5 L647.5 344.5 L648.5 343.5 L650.5 343.5 L651.5 343.5 L652.5 343.5 L653.5 343.5 L654.5 343.5 L655.5 343.5 L656.5 343.5 L657.5 343.5 L658.5 343.5 L659.5 343.5 L660.5 343.5 L661.5 343.5 L662.5 343.5 L663.5 343.5 L664.5 343.5 L665.5 343.5 L666.5 343.5 L667.5 343.5 L668.5 343.5 L669.5 342.5 L670.5 342.5 L671.5 342.5 L672.5 342.5 L673.5 342.5 L674.5 342.5 L675.5 342.5 L676.5 342.5 L677.5 342.5 L678.5 342.5 L679.5 342.5 L680.5 342.5 L681.5 342.5 L682.5 342.5 L683.5 342.5 L684.5 342.5 L685.5 342.5 L686.5 342.5 L687.5 342.5 L689.5 342.5 L690.5 342.5 L691.5 342.5 L692.5 342.5 L693.5 342.5 L694.5 342.5 L695.5 342.5 L697.5 342.5 L698.5 342.5 L699.5 342.5 L700.5 342.5 L701.5 342.5 L702.5 342.5 L702.5 342.5 L703.5 342.5 L704.5 342.5 L704.5 342.5 L705.5 342.5" stroke="#f2a0a0" stroke-width="1.6" fill="none" opacity="0.95" stroke-linejoin="round"/>
<path d="M582.5 300.5 L583.5 300.5 L585.5 302.5 L586.5 305.5 L587.5 308.5 L588.5 312.5 L589.5 316.5 L590.5 321.5 L591.5 326.5 L592.5 331.5 L593.5 336.5 L594.5 341.5 L595.5 347.5 L596.5 353.5 L597.5 358.5 L598.5 364.5 L599.5 369.5 L600.5 374.5 L601.5 378.5 L602.5 381.5 L603.5 382.5 L604.5 382.5 L605.5 381.5 L606.5 380.5 L607.5 378.5 L608.5 376.5 L609.5 373.5 L610.5 370.5 L611.5 367.5 L612.5 364.5 L613.5 362.5 L614.5 359.5 L615.5 357.5 L616.5 355.5 L617.5 353.5 L618.5 352.5 L619.5 351.5 L620.5 350.5 L621.5 350.5 L622.5 349.5 L623.5 349.5 L624.5 349.5 L625.5 349.5 L626.5 349.5 L627.5 350.5 L628.5 350.5 L629.5 350.5 L630.5 350.5 L631.5 350.5 L632.5 349.5 L632.5 349.5 L633.5 349.5 L635.5 348.5 L636.5 348.5 L637.5 348.5 L638.5 348.5 L638.5 347.5 L639.5 347.5 L640.5 347.5 L641.5 347.5 L642.5 346.5 L643.5 346.5 L644.5 346.5 L645.5 346.5 L646.5 346.5 L648.5 345.5 L649.5 345.5 L650.5 345.5 L651.5 345.5 L652.5 345.5 L653.5 345.5 L653.5 345.5 L654.5 345.5 L655.5 345.5 L656.5 345.5 L657.5 345.5 L658.5 344.5 L659.5 344.5 L660.5 344.5 L661.5 344.5 L662.5 344.5 L663.5 344.5 L664.5 344.5 L665.5 344.5 L666.5 344.5 L668.5 344.5 L669.5 344.5 L670.5 344.5 L671.5 344.5 L672.5 344.5 L673.5 344.5 L674.5 344.5 L675.5 344.5 L676.5 344.5 L677.5 344.5 L678.5 343.5 L679.5 343.5 L680.5 343.5 L682.5 343.5 L683.5 343.5 L684.5 343.5 L685.5 343.5 L686.5 343.5 L687.5 343.5 L689.5 343.5 L690.5 343.5 L691.5 343.5 L692.5 343.5 L693.5 342.5 L694.5 342.5 L695.5 342.5 L696.5 342.5 L697.5 342.5 L697.5 342.5 L698.5 342.5 L699.5 342.5 L699.5 342.5 L700.5 342.5" stroke="#f2a0a0" stroke-width="1.6" fill="none" opacity="0.95" stroke-linejoin="round"/>
<path d="M582.5 304.5 L583.5 305.5 L585.5 307.5 L586.5 309.5 L587.5 312.5 L588.5 315.5 L589.5 318.5 L590.5 322.5 L591.5 327.5 L592.5 332.5 L593.5 337.5 L594.5 342.5 L595.5 347.5 L596.5 353.5 L597.5 359.5 L598.5 364.5 L599.5 369.5 L600.5 374.5 L601.5 378.5 L602.5 381.5 L603.5 383.5 L604.5 384.5 L605.5 384.5 L606.5 383.5 L607.5 382.5 L608.5 380.5 L609.5 378.5 L610.5 375.5 L611.5 372.5 L612.5 369.5 L613.5 365.5 L614.5 362.5 L615.5 359.5 L616.5 357.5 L617.5 354.5 L618.5 352.5 L619.5 350.5 L620.5 349.5 L621.5 348.5 L621.5 348.5 L622.5 347.5 L623.5 347.5 L624.5 347.5 L626.5 346.5 L627.5 346.5 L628.5 346.5 L628.5 345.5 L629.5 345.5 L630.5 345.5 L631.5 345.5 L632.5 344.5 L633.5 344.5 L634.5 344.5 L635.5 344.5 L637.5 343.5 L638.5 343.5 L639.5 343.5 L640.5 343.5 L641.5 343.5 L642.5 342.5 L643.5 342.5 L644.5 342.5 L645.5 342.5 L646.5 342.5 L647.5 342.5 L648.5 342.5 L649.5 342.5 L650.5 341.5 L651.5 341.5 L652.5 341.5 L653.5 341.5 L654.5 341.5 L655.5 341.5 L656.5 341.5 L657.5 341.5 L658.5 341.5 L659.5 341.5 L660.5 341.5 L661.5 341.5 L662.5 341.5 L663.5 341.5 L664.5 341.5 L665.5 341.5 L666.5 341.5 L667.5 341.5 L668.5 340.5 L669.5 340.5 L670.5 340.5 L671.5 340.5 L672.5 340.5 L673.5 340.5 L674.5 340.5 L675.5 340.5 L676.5 340.5 L677.5 340.5 L678.5 340.5 L679.5 340.5 L680.5 340.5 L681.5 340.5 L682.5 340.5 L683.5 341.5 L684.5 341.5 L685.5 341.5 L686.5 341.5 L687.5 341.5 L688.5 341.5 L689.5 341.5 L690.5 341.5 L691.5 341.5 L692.5 341.5 L693.5 341.5 L694.5 341.5 L696.5 341.5 L697.5 342.5 L698.5 342.5 L699.5 342.5 L700.5 342.5 L701.5 342.5 L702.5 342.5 L703.5 342.5 L704.5 342.5 L704.5 342.5 L705.5 342.5" stroke="#f2a0a0" stroke-width="1.6" fill="none" opacity="0.95" stroke-linejoin="round"/>
<path d="M582.5 298.5 L583.5 299.5 L585.5 303.5 L586.5 306.5 L587.5 311.5 L588.5 315.5 L589.5 320.5 L590.5 325.5 L591.5 330.5 L592.5 335.5 L593.5 340.5 L594.5 345.5 L595.5 351.5 L596.5 357.5 L597.5 362.5 L598.5 367.5 L599.5 372.5 L600.5 376.5 L601.5 379.5 L602.5 381.5 L603.5 381.5 L604.5 381.5 L605.5 380.5 L606.5 379.5 L607.5 376.5 L608.5 373.5 L609.5 369.5 L610.5 366.5 L611.5 362.5 L612.5 359.5 L613.5 356.5 L614.5 353.5 L615.5 351.5 L616.5 350.5 L617.5 349.5 L618.5 348.5 L619.5 347.5 L620.5 347.5 L621.5 346.5 L622.5 346.5 L623.5 345.5 L623.5 345.5 L624.5 345.5 L625.5 345.5 L626.5 345.5 L627.5 345.5 L628.5 344.5 L629.5 344.5 L631.5 344.5 L632.5 344.5 L633.5 344.5 L634.5 344.5 L635.5 344.5 L635.5 344.5 L636.5 344.5 L637.5 344.5 L638.5 344.5 L639.5 343.5 L640.5 343.5 L641.5 343.5 L642.5 343.5 L644.5 343.5 L645.5 343.5 L646.5 343.5 L647.5 343.5 L648.5 343.5 L649.5 343.5 L650.5 343.5 L651.5 343.5 L652.5 343.5 L653.5 343.5 L654.5 343.5 L655.5 343.5 L656.5 343.5 L657.5 343.5 L658.5 343.5 L659.5 343.5 L660.5 343.5 L661.5 343.5 L662.5 343.5 L663.5 343.5 L664.5 343.5 L665.5 343.5 L666.5 343.5 L667.5 343.5 L668.5 343.5 L669.5 343.5 L670.5 343.5 L671.5 343.5 L672.5 343.5 L673.5 343.5 L674.5 343.5 L675.5 343.5 L676.5 343.5 L677.5 343.5 L678.5 343.5 L679.5 343.5 L680.5 343.5 L681.5 343.5 L682.5 343.5 L683.5 343.5 L684.5 343.5 L685.5 343.5 L686.5 343.5 L687.5 343.5 L688.5 343.5 L689.5 343.5 L690.5 343.5 L691.5 343.5 L692.5 343.5 L693.5 343.5 L695.5 343.5 L696.5 343.5 L697.5 343.5 L698.5 343.5 L699.5 342.5 L700.5 342.5 L701.5 342.5 L702.5 342.5 L703.5 342.5 L704.5 342.5 L704.5 342.5 L705.5 342.5" stroke="#f2a0a0" stroke-width="1.6" fill="none" opacity="0.95" stroke-linejoin="round"/>
<path d="M582.5 296.5 L583.5 294.5 L584.5 294.5 L585.5 296.5 L586.5 301.5 L588.5 306.5 L589.5 310.5 L590.5 316.5 L591.5 321.5 L592.5 326.5 L593.5 332.5 L594.5 338.5 L595.5 345.5 L596.5 352.5 L597.5 359.5 L598.5 367.5 L599.5 374.5 L600.5 379.5 L602.5 382.5 L603.5 382.5 L604.5 381.5 L605.5 380.5 L606.5 379.5 L607.5 377.5 L608.5 375.5 L609.5 373.5 L610.5 371.5 L611.5 368.5 L612.5 365.5 L614.5 362.5 L615.5 360.5 L616.5 358.5 L617.5 356.5 L618.5 354.5 L619.5 352.5 L620.5 351.5 L622.5 350.5 L623.5 349.5 L624.5 348.5 L625.5 347.5 L626.5 346.5 L627.5 346.5 L628.5 345.5 L629.5 345.5 L630.5 344.5 L631.5 344.5 L632.5 343.5 L633.5 343.5 L634.5 343.5 L635.5 343.5 L636.5 343.5 L637.5 343.5 L638.5 343.5 L639.5 343.5 L640.5 343.5 L642.5 343.5 L643.5 343.5 L644.5 342.5 L645.5 342.5 L646.5 342.5 L647.5 342.5 L648.5 342.5 L649.5 342.5 L650.5 342.5 L651.5 342.5 L653.5 342.5 L654.5 342.5 L655.5 342.5 L656.5 342.5 L657.5 342.5 L658.5 342.5 L659.5 342.5 L660.5 342.5 L661.5 342.5 L662.5 342.5 L663.5 342.5 L664.5 342.5 L665.5 343.5 L666.5 343.5 L668.5 344.5 L669.5 344.5 L670.5 344.5 L671.5 345.5 L672.5 345.5 L673.5 346.5 L674.5 346.5 L675.5 346.5 L677.5 346.5 L678.5 346.5 L679.5 346.5 L680.5 346.5 L681.5 346.5 L682.5 346.5 L683.5 345.5 L684.5 345.5 L685.5 345.5 L686.5 344.5 L687.5 344.5 L688.5 344.5 L689.5 343.5 L690.5 343.5 L691.5 342.5 L692.5 342.5 L693.5 342.5 L694.5 342.5 L695.5 342.5 L696.5 342.5 L697.5 342.5 L698.5 342.5 L700.5 342.5 L701.5 342.5 L701.5 342.5 L701.5 342.5 L700.5 342.5 L700.5 342.5 L700.5 342.5 L699.5 342.5 L699.5 342.5 L699.5 342.5 L699.5 342.5 L699.5 342.5 L699.5 342.5 L700.5 342.5 L701.5 342.5 L703.5 342.5 L705.5 342.5 L708.5 342.5 L711.5 342.5 L715.5 342.5 L720.5 342.5 L721.5 342.5 L721.5 342.5 L722.5 342.5 L722.5 342.5 L723.5 342.5 L724.5 342.5 L724.5 342.5 L725.5 342.5 L726.5 342.5 L726.5 342.5 L727.5 342.5 L728.5 342.5 L728.5 342.5 L729.5 342.5 L730.5 342.5 L731.5 342.5 L731.5 342.5 L732.5 342.5 L733.5 342.5 L734.5 342.5 L735.5 342.5 L735.5 342.5 L736.5 342.5 L737.5 342.5 L738.5 342.5 L739.5 342.5 L740.5 342.5 L741.5 342.5 L742.5 342.5 L743.5 342.5 L743.5 342.5 L744.5 342.5 L745.5 342.5 L746.5 342.5 L747.5 342.5 L748.5 342.5 L749.5 342.5 L750.5 342.5 L751.5 342.5 L752.5 342.5 L753.5 342.5 L754.5 342.5 L755.5 342.5 L756.5 342.5 L757.5 342.5 L759.5 342.5 L760.5 342.5 L761.5 342.5 L762.5 342.5 L763.5 342.5 L764.5 342.5 L765.5 342.5 L766.5 342.5 L767.5 342.5 L768.5 342.5 L770.5 342.5 L771.5 342.5 L772.5 342.5 L773.5 342.5 L774.5 342.5 L775.5 342.5 L776.5 342.5 L778.5 342.5 L779.5 342.5 L780.5 342.5 L781.5 342.5 L782.5 342.5 L783.5 342.5 L785.5 342.5 L786.5 342.5 L787.5 342.5 L788.5 342.5 L789.5 342.5 L791.5 342.5 L792.5 342.5 L793.5 342.5 L794.5 342.5 L796.5 342.5 L797.5 342.5 L798.5 342.5 L799.5 342.5 L800.5 342.5 L802.5 342.5 L803.5 342.5 L804.5 342.5 L805.5 342.5 L807.5 342.5 L808.5 342.5 L809.5 342.5 L810.5 342.5 L812.5 342.5 L813.5 342.5 L814.5 342.5 L815.5 342.5 L816.5 342.5 L818.5 342.5 L819.5 342.5 L820.5 342.5 L821.5 342.5 L823.5 342.5 L824.5 342.5 L825.5 342.5 L826.5 342.5 L828.5 342.5 L829.5 342.5 L830.5 342.5 L831.5 342.5 L832.5 342.5 L834.5 342.5 L835.5 342.5 L836.5 342.5 L837.5 342.5 L839.5 342.5 L840.5 342.5 L841.5 342.5 L842.5 342.5 L843.5 342.5 L844.5 342.5 L846.5 342.5 L847.5 342.5 L848.5 342.5 L849.5 342.5 L850.5 342.5 L852.5 342.5 L853.5 342.5 L854.5 342.5 L855.5 342.5 L856.5 342.5 L857.5 342.5 L858.5 342.5 L859.5 342.5 L861.5 342.5 L862.5 342.5 L863.5 342.5 L864.5 342.5 L865.5 342.5 L866.5 342.5 L867.5 342.5 L868.5 342.5 L869.5 342.5 L870.5 342.5 L871.5 342.5 L872.5 342.5 L873.5 342.5 L874.5 342.5 L875.5 342.5 L876.5 342.5 L877.5 342.5 L878.5 342.5 L879.5 342.5 L880.5 342.5 L881.5 342.5 L882.5 342.5 L883.5 342.5 L884.5 342.5 L885.5 342.5 L886.5 342.5 L887.5 342.5 L888.5 342.5 L889.5 342.5 L889.5 342.5 L890.5 342.5 L891.5 342.5 L892.5 342.5 L893.5 342.5 L894.5 342.5 L894.5 342.5 L895.5 342.5 L896.5 342.5 L897.5 342.5 L897.5 342.5 L898.5 342.5 L899.5 342.5 L900.5 342.5 L900.5 342.5 L901.5 342.5 L902.5 342.5 L902.5 342.5 L903.5 342.5 L904.5 342.5 L904.5 342.5 L905.5 342.5 L905.5 342.5 L906.5 342.5 L906.5 342.5 L907.5 342.5 L907.5 342.5 L908.5 342.5" stroke="#0a3ce0" stroke-width="1.5" fill="none" opacity="1" stroke-linejoin="round"/>
</g>
<g clip-path="url(#c3)">
<path d="M575.5 460.5 L576.5 459.5 L577.5 459.5 L578.5 458.5 L579.5 457.5 L580.5 456.5 L582.5 455.5 L582.5 454.5 L584.5 453.5 L584.5 452.5 L586.5 453.5 L587.5 454.5 L587.5 454.5 L588.5 455.5 L589.5 457.5 L590.5 458.5 L591.5 459.5 L592.5 461.5 L593.5 462.5 L594.5 463.5 L595.5 464.5 L597.5 465.5 L598.5 466.5 L599.5 467.5 L600.5 467.5 L601.5 467.5 L602.5 467.5 L603.5 466.5 L604.5 465.5 L605.5 465.5 L606.5 464.5 L607.5 462.5 L608.5 461.5 L609.5 460.5 L610.5 458.5 L611.5 457.5 L612.5 455.5 L613.5 453.5 L614.5 452.5 L615.5 450.5 L616.5 448.5 L617.5 447.5 L618.5 445.5 L619.5 443.5 L620.5 441.5 L621.5 439.5 L622.5 437.5 L623.5 434.5 L624.5 432.5 L626.5 429.5 L627.5 427.5 L628.5 424.5 L629.5 422.5 L630.5 419.5 L631.5 417.5 L632.5 415.5 L633.5 413.5 L634.5 411.5 L635.5 410.5 L636.5 409.5 L637.5 408.5 L638.5 408.5 L639.5 409.5 L640.5 411.5 L641.5 414.5 L642.5 417.5 L643.5 420.5 L644.5 423.5 L645.5 426.5 L646.5 428.5 L647.5 430.5 L648.5 431.5 L649.5 433.5 L650.5 435.5 L651.5 436.5 L652.5 438.5 L653.5 439.5 L654.5 440.5 L655.5 441.5 L656.5 442.5 L657.5 443.5 L658.5 443.5 L659.5 443.5 L660.5 443.5 L661.5 442.5 L662.5 441.5 L663.5 440.5 L664.5 440.5 L665.5 440.5 L666.5 440.5 L667.5 440.5 L668.5 440.5 L669.5 440.5 L670.5 440.5 L671.5 440.5 L672.5 441.5 L674.5 441.5 L675.5 441.5 L676.5 441.5 L677.5 441.5 L678.5 442.5 L679.5 442.5 L680.5 442.5 L681.5 442.5 L682.5 442.5 L683.5 443.5 L685.5 443.5 L686.5 443.5 L687.5 444.5 L688.5 444.5 L689.5 444.5 L690.5 444.5 L691.5 445.5 L692.5 445.5 L692.5 445.5 L694.5 445.5 L695.5 444.5 L696.5 444.5 L697.5 443.5 L698.5 442.5 L699.5 442.5 L700.5 442.5 L701.5 442.5 L702.5 443.5 L703.5 443.5 L704.5 444.5 L705.5 445.5 L706.5 445.5 L707.5 446.5 L708.5 447.5 L709.5 448.5 L710.5 448.5 L711.5 448.5 L712.5 448.5 L713.5 448.5 L714.5 448.5 L715.5 448.5 L716.5 448.5 L717.5 447.5 L718.5 447.5 L719.5 446.5 L720.5 445.5 L721.5 445.5 L722.5 444.5 L723.5 444.5 L724.5 443.5 L725.5 442.5 L726.5 442.5 L727.5 441.5 L728.5 440.5 L729.5 439.5 L730.5 439.5 L731.5 438.5 L732.5 437.5 L733.5 437.5 L734.5 437.5 L735.5 436.5 L737.5 437.5 L738.5 437.5 L739.5 438.5 L739.5 439.5 L740.5 440.5 L741.5 441.5 L743.5 442.5 L744.5 443.5 L745.5 443.5 L746.5 443.5 L747.5 443.5 L748.5 443.5 L749.5 443.5 L750.5 443.5 L751.5 443.5 L752.5 442.5 L753.5 442.5 L754.5 442.5 L755.5 442.5 L756.5 441.5 L757.5 441.5 L758.5 441.5 L759.5 440.5 L760.5 440.5 L761.5 440.5 L762.5 439.5 L763.5 438.5 L764.5 438.5 L765.5 437.5 L766.5 436.5 L767.5 435.5 L768.5 434.5 L769.5 434.5 L770.5 433.5 L771.5 433.5 L772.5 432.5 L773.5 432.5 L774.5 432.5 L775.5 433.5 L776.5 433.5 L778.5 434.5 L779.5 436.5 L780.5 437.5 L781.5 439.5 L782.5 441.5 L783.5 443.5 L784.5 445.5 L785.5 447.5 L786.5 449.5 L787.5 451.5 L788.5 452.5 L789.5 454.5 L790.5 455.5 L791.5 456.5 L792.5 457.5 L793.5 458.5 L794.5 458.5 L795.5 459.5 L796.5 460.5 L797.5 460.5 L798.5 461.5 L799.5 461.5 L800.5 462.5 L801.5 462.5 L802.5 462.5 L803.5 462.5 L804.5 462.5 L805.5 462.5 L806.5 462.5 L807.5 461.5 L808.5 461.5 L809.5 460.5 L810.5 459.5 L811.5 458.5 L812.5 458.5 L813.5 457.5 L814.5 456.5 L815.5 455.5 L816.5 454.5 L817.5 453.5 L818.5 452.5 L819.5 451.5 L820.5 450.5 L821.5 449.5 L822.5 449.5 L823.5 448.5 L824.5 448.5 L825.5 447.5 L826.5 447.5 L827.5 446.5 L828.5 446.5 L829.5 445.5 L830.5 445.5 L831.5 444.5 L832.5 444.5 L833.5 443.5 L834.5 443.5 L835.5 442.5 L836.5 442.5 L837.5 441.5 L838.5 441.5 L839.5 440.5 L840.5 440.5 L841.5 440.5 L842.5 439.5 L843.5 439.5 L844.5 438.5 L845.5 438.5 L846.5 437.5 L847.5 437.5 L848.5 436.5 L849.5 436.5 L851.5 435.5 L852.5 435.5 L853.5 434.5 L854.5 434.5 L855.5 433.5 L856.5 433.5 L857.5 432.5 L857.5 432.5 L858.5 431.5 L859.5 431.5 L860.5 430.5 L861.5 429.5 L863.5 428.5 L864.5 426.5 L865.5 425.5 L866.5 424.5 L867.5 422.5 L868.5 421.5 L868.5 420.5 L869.5 420.5 L870.5 419.5 L872.5 420.5 L872.5 420.5 L873.5 421.5 L874.5 423.5 L875.5 425.5 L876.5 427.5 L877.5 429.5 L879.5 432.5 L880.5 434.5 L881.5 436.5 L882.5 437.5 L883.5 439.5 L884.5 440.5 L885.5 440.5 L886.5 440.5 L887.5 439.5 L888.5 438.5 L889.5 437.5 L890.5 435.5 L891.5 433.5 L893.5 431.5 L894.5 429.5 L895.5 428.5 L896.5 426.5 L897.5 424.5 L898.5 422.5 L899.5 421.5 L900.5 420.5 L900.5 420.5 L902.5 420.5 L903.5 421.5 L905.5 422.5 L906.5 425.5 L907.5 427.5 L907.5 429.5 L908.5 430.5" stroke="#f590dc" stroke-width="1.15" fill="none" opacity="1" stroke-linejoin="round"/>
<path d="M575.5 468.5 L576.5 468.5 L577.5 469.5 L578.5 469.5 L579.5 470.5 L580.5 470.5 L581.5 471.5 L582.5 471.5 L584.5 471.5 L584.5 470.5 L585.5 470.5 L586.5 469.5 L587.5 469.5 L589.5 468.5 L590.5 468.5 L591.5 468.5 L592.5 468.5 L593.5 469.5 L594.5 469.5 L595.5 470.5 L596.5 471.5 L597.5 471.5 L598.5 472.5 L599.5 472.5 L600.5 472.5 L601.5 473.5 L602.5 472.5 L603.5 472.5 L604.5 471.5 L605.5 471.5 L606.5 470.5 L607.5 469.5 L608.5 468.5 L609.5 467.5 L610.5 465.5 L611.5 464.5 L612.5 463.5 L613.5 461.5 L614.5 460.5 L615.5 458.5 L616.5 457.5 L617.5 455.5 L618.5 454.5 L619.5 453.5 L620.5 451.5 L621.5 450.5 L622.5 448.5 L623.5 446.5 L625.5 445.5 L626.5 443.5 L627.5 441.5 L628.5 439.5 L629.5 438.5 L630.5 436.5 L631.5 435.5 L632.5 434.5 L633.5 433.5 L634.5 432.5 L635.5 431.5 L636.5 430.5 L637.5 430.5 L638.5 430.5 L639.5 431.5 L640.5 432.5 L641.5 433.5 L642.5 433.5 L643.5 432.5 L644.5 431.5 L645.5 430.5 L646.5 428.5 L647.5 427.5 L648.5 426.5 L649.5 425.5 L651.5 424.5 L652.5 424.5 L653.5 425.5 L654.5 426.5 L655.5 428.5 L656.5 430.5 L657.5 433.5 L658.5 435.5 L659.5 437.5 L660.5 439.5 L661.5 441.5 L662.5 442.5 L663.5 444.5 L664.5 446.5 L665.5 447.5 L666.5 449.5 L667.5 451.5 L668.5 452.5 L669.5 453.5 L670.5 454.5 L671.5 455.5 L672.5 456.5 L673.5 457.5 L674.5 458.5 L675.5 459.5 L676.5 460.5 L677.5 461.5 L678.5 461.5 L680.5 462.5 L680.5 462.5 L681.5 462.5 L682.5 462.5 L683.5 462.5 L684.5 462.5 L685.5 462.5 L687.5 462.5 L688.5 462.5 L689.5 462.5 L690.5 462.5 L691.5 462.5 L692.5 462.5 L693.5 462.5 L694.5 461.5 L695.5 462.5 L696.5 462.5 L697.5 462.5 L698.5 462.5 L699.5 463.5 L700.5 463.5 L701.5 463.5 L702.5 464.5 L703.5 464.5 L704.5 465.5 L705.5 465.5 L706.5 465.5 L707.5 466.5 L708.5 465.5 L709.5 465.5 L710.5 465.5 L711.5 465.5 L712.5 464.5 L713.5 463.5 L714.5 463.5 L715.5 462.5 L716.5 461.5 L717.5 460.5 L718.5 459.5 L719.5 458.5 L720.5 457.5 L721.5 456.5 L722.5 455.5 L723.5 455.5 L724.5 454.5 L725.5 453.5 L726.5 452.5 L728.5 451.5 L729.5 449.5 L730.5 448.5 L730.5 448.5 L731.5 447.5 L732.5 447.5 L734.5 447.5 L735.5 447.5 L736.5 448.5 L737.5 449.5 L738.5 450.5 L739.5 452.5 L740.5 453.5 L741.5 454.5 L742.5 456.5 L743.5 457.5 L744.5 457.5 L745.5 458.5 L746.5 458.5 L747.5 457.5 L748.5 457.5 L749.5 456.5 L750.5 455.5 L751.5 454.5 L752.5 453.5 L753.5 452.5 L754.5 451.5 L755.5 450.5 L756.5 450.5 L757.5 449.5 L758.5 449.5 L759.5 448.5 L759.5 448.5 L760.5 447.5 L761.5 447.5 L762.5 446.5 L763.5 446.5 L764.5 445.5 L766.5 445.5 L767.5 445.5 L768.5 445.5 L769.5 445.5 L770.5 445.5 L771.5 445.5 L772.5 445.5 L773.5 446.5 L774.5 446.5 L775.5 446.5 L776.5 447.5 L777.5 447.5 L778.5 448.5 L779.5 448.5 L780.5 449.5 L781.5 450.5 L782.5 450.5 L783.5 451.5 L784.5 452.5 L785.5 452.5 L786.5 453.5 L787.5 453.5 L788.5 454.5 L789.5 454.5 L790.5 455.5 L791.5 456.5 L792.5 457.5 L793.5 457.5 L794.5 458.5 L796.5 459.5 L797.5 460.5 L798.5 461.5 L799.5 462.5 L800.5 463.5 L801.5 464.5 L801.5 464.5 L802.5 465.5 L803.5 465.5 L804.5 465.5 L805.5 465.5 L806.5 464.5 L807.5 463.5 L808.5 462.5 L809.5 460.5 L810.5 458.5 L811.5 455.5 L812.5 453.5 L813.5 451.5 L814.5 449.5 L815.5 448.5 L816.5 447.5 L817.5 446.5 L818.5 446.5 L819.5 445.5 L820.5 444.5 L821.5 443.5 L822.5 443.5 L823.5 442.5 L824.5 441.5 L825.5 441.5 L826.5 440.5 L827.5 440.5 L828.5 440.5 L829.5 440.5 L830.5 440.5 L831.5 440.5 L832.5 441.5 L833.5 441.5 L834.5 442.5 L835.5 443.5 L836.5 444.5 L837.5 445.5 L838.5 446.5 L839.5 448.5 L840.5 449.5 L841.5 450.5 L842.5 450.5 L843.5 451.5 L844.5 452.5 L845.5 452.5 L846.5 452.5 L847.5 452.5 L848.5 452.5 L849.5 451.5 L850.5 451.5 L851.5 451.5 L852.5 450.5 L853.5 449.5 L854.5 449.5 L855.5 448.5 L856.5 447.5 L857.5 447.5 L858.5 446.5 L859.5 446.5 L860.5 445.5 L861.5 445.5 L862.5 444.5 L863.5 444.5 L864.5 443.5 L865.5 443.5 L866.5 442.5 L867.5 442.5 L868.5 441.5 L869.5 441.5 L870.5 440.5 L871.5 440.5 L872.5 439.5 L873.5 439.5 L874.5 438.5 L875.5 438.5 L876.5 438.5 L877.5 437.5 L878.5 437.5 L879.5 436.5 L880.5 436.5 L881.5 435.5 L882.5 435.5 L883.5 434.5 L884.5 434.5 L885.5 433.5 L886.5 432.5 L887.5 432.5 L888.5 431.5 L889.5 431.5 L890.5 430.5 L891.5 429.5 L892.5 429.5 L893.5 428.5 L894.5 427.5 L895.5 427.5 L896.5 426.5 L898.5 425.5 L899.5 424.5 L900.5 424.5 L901.5 423.5 L902.5 422.5 L903.5 421.5 L904.5 421.5 L905.5 420.5 L906.5 419.5 L907.5 419.5 L907.5 418.5 L908.5 418.5" stroke="#f590dc" stroke-width="1.15" fill="none" opacity="1" stroke-linejoin="round"/>
<path d="M519.5 487.5 L520.5 488.5 L520.5 488.5 L521.5 489.5 L522.5 490.5 L523.5 491.5 L524.5 493.5 L525.5 494.5 L527.5 495.5 L528.5 496.5 L529.5 497.5 L530.5 498.5 L531.5 499.5 L532.5 500.5 L533.5 500.5 L534.5 501.5 L535.5 502.5 L536.5 503.5 L537.5 504.5 L538.5 504.5 L539.5 505.5 L540.5 506.5 L541.5 506.5 L542.5 506.5 L543.5 506.5 L544.5 506.5 L545.5 505.5 L546.5 505.5 L547.5 504.5 L548.5 503.5 L549.5 502.5 L550.5 500.5 L551.5 499.5 L552.5 498.5 L553.5 497.5 L554.5 496.5 L555.5 495.5 L556.5 494.5 L557.5 493.5 L558.5 492.5 L559.5 491.5 L560.5 490.5 L561.5 489.5 L562.5 489.5 L563.5 488.5 L564.5 487.5 L565.5 487.5 L566.5 487.5 L567.5 487.5 L568.5 487.5 L569.5 487.5 L570.5 488.5 L571.5 488.5 L572.5 488.5 L573.5 488.5 L574.5 488.5 L575.5 488.5 L576.5 486.5 L577.5 484.5 L578.5 482.5 L579.5 479.5 L580.5 477.5 L581.5 475.5 L582.5 474.5 L583.5 473.5 L584.5 473.5 L585.5 473.5 L586.5 473.5 L587.5 473.5 L588.5 473.5 L589.5 473.5 L590.5 473.5 L592.5 474.5 L593.5 474.5 L594.5 475.5 L595.5 476.5 L596.5 477.5 L597.5 478.5 L598.5 480.5 L599.5 482.5 L600.5 484.5 L601.5 487.5 L602.5 490.5 L603.5 493.5 L604.5 496.5 L605.5 499.5 L606.5 502.5 L607.5 505.5 L608.5 508.5 L610.5 510.5 L611.5 511.5 L612.5 512.5 L613.5 513.5 L614.5 512.5 L615.5 511.5 L616.5 510.5 L617.5 508.5 L618.5 505.5 L619.5 502.5 L620.5 499.5 L621.5 496.5 L622.5 492.5 L623.5 489.5 L625.5 485.5 L626.5 481.5 L627.5 477.5 L628.5 473.5 L629.5 469.5 L630.5 466.5 L631.5 462.5 L632.5 459.5 L633.5 456.5 L634.5 454.5 L635.5 451.5 L636.5 450.5 L637.5 448.5 L638.5 448.5 L639.5 448.5 L640.5 449.5 L641.5 450.5 L642.5 453.5 L643.5 455.5 L644.5 458.5 L645.5 461.5 L646.5 464.5 L647.5 467.5 L648.5 469.5 L649.5 470.5 L650.5 471.5 L651.5 471.5 L652.5 470.5 L653.5 469.5 L654.5 467.5 L655.5 465.5 L656.5 463.5 L657.5 461.5 L658.5 459.5 L659.5 457.5 L660.5 456.5 L661.5 455.5 L662.5 454.5 L663.5 454.5 L664.5 455.5 L665.5 456.5 L666.5 458.5 L667.5 460.5 L668.5 462.5 L669.5 465.5 L670.5 468.5 L671.5 471.5 L672.5 473.5 L673.5 476.5 L674.5 478.5 L675.5 480.5 L676.5 483.5 L677.5 485.5 L678.5 488.5 L679.5 490.5 L680.5 493.5 L681.5 495.5 L682.5 497.5 L683.5 499.5 L684.5 501.5 L685.5 502.5 L686.5 502.5 L687.5 503.5 L688.5 502.5 L689.5 501.5 L690.5 500.5 L691.5 498.5 L692.5 496.5 L693.5 494.5 L694.5 491.5 L695.5 489.5 L696.5 486.5 L698.5 484.5 L699.5 481.5 L699.5 479.5 L700.5 477.5 L701.5 476.5 L702.5 475.5 L703.5 473.5 L704.5 472.5 L705.5 472.5 L706.5 473.5 L707.5 473.5 L708.5 475.5 L709.5 476.5 L710.5 478.5 L711.5 479.5 L712.5 480.5 L712.5 482.5 L713.5 484.5 L715.5 486.5 L716.5 488.5 L717.5 490.5 L718.5 492.5 L719.5 494.5 L720.5 496.5 L721.5 497.5 L722.5 499.5 L723.5 500.5 L724.5 501.5 L725.5 501.5 L726.5 502.5 L727.5 502.5 L728.5 502.5 L729.5 501.5 L731.5 501.5 L732.5 500.5 L733.5 499.5 L734.5 499.5 L735.5 498.5 L736.5 497.5 L736.5 496.5 L737.5 495.5 L739.5 493.5 L740.5 491.5 L741.5 489.5 L741.5 487.5 L742.5 484.5 L744.5 481.5 L745.5 478.5 L746.5 477.5 L747.5 475.5 L748.5 474.5 L748.5 472.5 L749.5 470.5 L750.5 469.5 L752.5 467.5 L753.5 465.5 L754.5 464.5 L755.5 462.5 L756.5 460.5 L757.5 459.5 L758.5 457.5 L759.5 456.5 L760.5 455.5 L761.5 454.5 L762.5 453.5 L763.5 452.5 L764.5 451.5 L765.5 450.5 L766.5 450.5 L767.5 449.5 L768.5 448.5 L769.5 448.5 L770.5 448.5 L771.5 447.5 L772.5 447.5 L773.5 447.5 L774.5 448.5 L775.5 448.5 L776.5 449.5 L777.5 450.5 L778.5 451.5 L779.5 452.5 L780.5 454.5 L781.5 456.5 L782.5 457.5 L783.5 459.5 L784.5 461.5 L785.5 463.5 L786.5 465.5 L787.5 466.5 L788.5 468.5 L789.5 469.5 L790.5 470.5 L791.5 471.5 L792.5 472.5 L793.5 474.5 L794.5 474.5 L795.5 475.5 L796.5 476.5 L797.5 476.5 L798.5 476.5 L799.5 476.5 L800.5 475.5 L801.5 474.5 L802.5 473.5 L803.5 472.5 L804.5 470.5 L805.5 468.5 L806.5 466.5 L807.5 464.5 L808.5 462.5 L809.5 460.5 L810.5 458.5 L811.5 456.5 L812.5 455.5 L813.5 454.5 L814.5 453.5 L815.5 451.5 L816.5 450.5 L817.5 449.5 L818.5 448.5 L819.5 447.5 L820.5 446.5 L821.5 446.5 L822.5 445.5 L823.5 445.5 L824.5 445.5 L825.5 445.5 L826.5 445.5 L827.5 446.5 L828.5 447.5 L829.5 448.5 L830.5 449.5 L831.5 450.5 L832.5 452.5 L833.5 453.5 L834.5 455.5 L835.5 456.5 L836.5 457.5 L837.5 459.5 L838.5 460.5 L839.5 461.5 L840.5 462.5 L841.5 463.5 L842.5 464.5 L843.5 464.5 L844.5 465.5 L845.5 466.5 L846.5 467.5 L847.5 467.5 L848.5 468.5 L849.5 468.5 L850.5 469.5 L851.5 469.5 L852.5 470.5 L853.5 470.5 L854.5 470.5 L855.5 470.5 L856.5 470.5 L857.5 470.5 L858.5 469.5 L859.5 469.5 L860.5 468.5 L861.5 468.5 L862.5 467.5 L863.5 466.5 L864.5 465.5 L865.5 464.5 L866.5 464.5 L867.5 463.5 L868.5 462.5 L869.5 461.5 L870.5 460.5 L871.5 459.5 L872.5 458.5 L873.5 457.5 L874.5 456.5 L875.5 455.5 L876.5 454.5 L877.5 453.5 L878.5 452.5 L879.5 451.5 L880.5 450.5 L881.5 449.5 L882.5 448.5 L883.5 448.5 L884.5 447.5 L885.5 446.5 L886.5 445.5 L887.5 444.5 L888.5 444.5 L889.5 443.5 L890.5 442.5 L891.5 442.5 L892.5 441.5 L893.5 441.5 L894.5 440.5 L895.5 440.5 L896.5 440.5 L897.5 440.5 L898.5 440.5 L900.5 440.5 L901.5 440.5 L902.5 441.5 L903.5 441.5 L904.5 441.5 L905.5 442.5 L906.5 442.5 L907.5 443.5 L907.5 443.5 L908.5 443.5" stroke="#f590dc" stroke-width="1.15" fill="none" opacity="1" stroke-linejoin="round"/>
<path d="M560.5 487.5 L561.5 486.5 L561.5 486.5 L562.5 485.5 L563.5 484.5 L564.5 482.5 L565.5 481.5 L566.5 480.5 L568.5 479.5 L569.5 477.5 L570.5 476.5 L571.5 475.5 L572.5 473.5 L573.5 472.5 L574.5 471.5 L575.5 470.5 L576.5 468.5 L577.5 465.5 L578.5 463.5 L579.5 460.5 L580.5 458.5 L581.5 457.5 L582.5 456.5 L583.5 456.5 L584.5 456.5 L585.5 457.5 L586.5 457.5 L587.5 458.5 L588.5 459.5 L589.5 460.5 L590.5 461.5 L591.5 462.5 L592.5 463.5 L594.5 464.5 L595.5 464.5 L596.5 465.5 L597.5 465.5 L598.5 465.5 L599.5 465.5 L600.5 465.5 L601.5 464.5 L602.5 464.5 L603.5 463.5 L604.5 462.5 L605.5 461.5 L606.5 459.5 L607.5 458.5 L608.5 457.5 L609.5 455.5 L610.5 454.5 L611.5 453.5 L612.5 451.5 L613.5 450.5 L614.5 449.5 L615.5 448.5 L616.5 447.5 L617.5 446.5 L618.5 445.5 L619.5 444.5 L620.5 443.5 L621.5 442.5 L622.5 441.5 L623.5 441.5 L625.5 440.5 L626.5 439.5 L627.5 438.5 L628.5 438.5 L629.5 437.5 L630.5 436.5 L631.5 436.5 L632.5 435.5 L633.5 434.5 L634.5 434.5 L635.5 434.5 L636.5 433.5 L637.5 433.5 L639.5 433.5 L640.5 433.5 L641.5 433.5 L642.5 433.5 L643.5 433.5 L644.5 433.5 L645.5 433.5 L645.5 433.5 L646.5 433.5 L648.5 430.5 L648.5 426.5 L650.5 424.5 L650.5 424.5 L651.5 424.5 L653.5 425.5 L654.5 426.5 L655.5 427.5 L656.5 428.5 L657.5 430.5 L658.5 432.5 L659.5 436.5 L660.5 439.5 L661.5 443.5 L662.5 447.5 L663.5 450.5 L664.5 453.5 L665.5 454.5 L666.5 455.5 L667.5 456.5 L668.5 456.5 L669.5 457.5 L670.5 458.5 L671.5 458.5 L672.5 458.5 L673.5 459.5 L674.5 459.5 L675.5 459.5 L676.5 460.5 L677.5 460.5 L678.5 460.5 L680.5 460.5 L680.5 460.5 L682.5 459.5 L683.5 459.5 L684.5 458.5 L685.5 458.5 L686.5 457.5 L687.5 456.5 L688.5 456.5 L689.5 455.5 L690.5 454.5 L691.5 454.5 L692.5 453.5 L693.5 453.5 L694.5 452.5 L695.5 452.5 L696.5 452.5 L697.5 452.5 L698.5 452.5 L699.5 453.5 L700.5 453.5 L701.5 454.5 L702.5 455.5 L703.5 455.5 L704.5 456.5 L705.5 457.5 L706.5 458.5 L707.5 458.5 L708.5 459.5 L709.5 460.5 L710.5 461.5 L711.5 461.5 L712.5 462.5 L714.5 463.5 L715.5 464.5 L716.5 465.5 L717.5 465.5 L718.5 466.5 L719.5 465.5 L720.5 465.5 L721.5 464.5 L722.5 462.5 L723.5 461.5 L724.5 459.5 L725.5 457.5 L726.5 455.5 L727.5 454.5 L728.5 452.5 L729.5 450.5 L730.5 447.5 L731.5 444.5 L732.5 442.5 L733.5 440.5 L734.5 438.5 L735.5 437.5 L736.5 437.5 L737.5 438.5 L738.5 439.5 L739.5 440.5 L740.5 442.5 L741.5 443.5 L743.5 445.5 L744.5 447.5 L745.5 448.5 L746.5 450.5 L747.5 451.5 L748.5 452.5 L749.5 454.5 L750.5 455.5 L751.5 456.5 L752.5 458.5 L753.5 459.5 L754.5 461.5 L755.5 462.5 L756.5 463.5 L757.5 464.5 L758.5 465.5 L759.5 466.5 L760.5 467.5 L761.5 467.5 L762.5 468.5 L763.5 469.5 L764.5 469.5 L765.5 470.5 L766.5 470.5 L767.5 470.5 L768.5 470.5 L769.5 470.5 L770.5 470.5 L771.5 470.5 L772.5 469.5 L773.5 469.5 L774.5 468.5 L775.5 468.5 L776.5 467.5 L777.5 466.5 L778.5 465.5 L779.5 464.5 L780.5 464.5 L781.5 463.5 L782.5 462.5 L783.5 461.5 L784.5 461.5 L785.5 460.5 L786.5 459.5 L787.5 459.5 L788.5 458.5 L789.5 458.5 L790.5 457.5 L791.5 457.5 L792.5 456.5 L793.5 456.5 L794.5 455.5 L795.5 455.5 L796.5 455.5 L797.5 455.5 L798.5 455.5 L799.5 455.5 L800.5 455.5 L801.5 456.5 L802.5 456.5 L803.5 457.5 L804.5 457.5 L805.5 458.5 L806.5 459.5 L807.5 459.5 L808.5 460.5 L809.5 460.5 L810.5 461.5 L811.5 462.5 L812.5 462.5 L813.5 462.5 L814.5 463.5 L815.5 463.5 L816.5 464.5 L817.5 464.5 L818.5 465.5 L819.5 465.5 L820.5 466.5 L821.5 466.5 L822.5 466.5 L823.5 466.5 L824.5 466.5 L825.5 466.5 L826.5 466.5 L827.5 465.5 L828.5 465.5 L829.5 464.5 L830.5 463.5 L831.5 463.5 L832.5 462.5 L833.5 461.5 L834.5 460.5 L835.5 459.5 L836.5 458.5 L837.5 457.5 L838.5 457.5 L839.5 456.5 L840.5 455.5 L841.5 454.5 L842.5 453.5 L843.5 452.5 L844.5 451.5 L845.5 451.5 L846.5 450.5 L847.5 449.5 L848.5 448.5 L849.5 447.5 L850.5 446.5 L851.5 446.5 L852.5 445.5 L853.5 444.5 L854.5 443.5 L855.5 442.5 L856.5 441.5 L857.5 440.5 L858.5 440.5 L859.5 439.5 L860.5 439.5 L861.5 439.5 L862.5 440.5 L863.5 441.5 L864.5 442.5 L865.5 444.5 L866.5 446.5 L867.5 448.5 L868.5 450.5 L869.5 452.5 L870.5 455.5 L871.5 457.5 L872.5 459.5 L873.5 460.5 L874.5 461.5 L875.5 462.5 L876.5 462.5 L877.5 462.5 L878.5 462.5 L879.5 461.5 L880.5 461.5 L881.5 460.5 L882.5 459.5 L883.5 458.5 L884.5 457.5 L885.5 456.5 L886.5 455.5 L887.5 454.5 L888.5 453.5 L889.5 453.5 L890.5 452.5 L891.5 452.5 L892.5 451.5 L893.5 451.5 L894.5 451.5 L895.5 450.5 L896.5 450.5 L898.5 450.5 L899.5 450.5 L900.5 449.5 L901.5 449.5 L902.5 449.5 L903.5 449.5 L904.5 449.5 L905.5 449.5 L906.5 448.5 L907.5 448.5 L907.5 448.5 L908.5 448.5" stroke="#f590dc" stroke-width="1.15" fill="none" opacity="1" stroke-linejoin="round"/>
<path d="M582.5 475.5 L583.5 479.5 L585.5 485.5 L586.5 490.5 L587.5 492.5 L588.5 495.5 L590.5 497.5 L591.5 497.5 L592.5 496.5 L593.5 495.5 L594.5 493.5 L595.5 490.5 L596.5 488.5 L597.5 486.5 L598.5 485.5 L600.5 483.5 L601.5 482.5 L602.5 482.5 L603.5 482.5 L604.5 482.5 L605.5 483.5 L606.5 483.5 L607.5 483.5 L608.5 483.5 L610.5 483.5 L611.5 482.5 L612.5 482.5 L613.5 481.5 L614.5 480.5 L615.5 478.5 L616.5 477.5 L617.5 475.5 L618.5 473.5 L619.5 470.5 L620.5 467.5 L621.5 464.5 L622.5 461.5 L623.5 457.5 L624.5 454.5 L625.5 450.5 L626.5 447.5 L628.5 442.5 L629.5 437.5 L630.5 433.5 L631.5 428.5 L632.5 424.5 L633.5 420.5 L634.5 416.5 L635.5 413.5 L636.5 411.5 L638.5 410.5 L639.5 411.5 L640.5 412.5 L641.5 414.5 L642.5 417.5 L643.5 420.5 L644.5 425.5 L645.5 430.5 L646.5 436.5 L648.5 442.5 L649.5 447.5 L650.5 451.5 L651.5 455.5 L652.5 459.5 L653.5 462.5 L654.5 464.5 L655.5 465.5 L656.5 464.5 L657.5 463.5 L659.5 462.5 L660.5 461.5 L661.5 460.5 L662.5 459.5 L663.5 458.5 L664.5 457.5 L665.5 456.5 L666.5 456.5 L667.5 455.5 L668.5 455.5 L669.5 455.5 L670.5 455.5 L671.5 455.5 L672.5 455.5 L673.5 456.5 L674.5 456.5 L675.5 457.5 L677.5 457.5 L678.5 458.5 L679.5 459.5 L680.5 459.5 L681.5 460.5 L682.5 461.5 L683.5 462.5 L684.5 463.5 L685.5 465.5 L686.5 466.5 L687.5 467.5 L688.5 468.5 L689.5 470.5 L690.5 471.5 L691.5 472.5 L692.5 474.5 L693.5 475.5 L694.5 477.5 L695.5 478.5 L696.5 479.5 L697.5 481.5 L698.5 481.5 L699.5 482.5 L700.5 483.5 L702.5 483.5 L703.5 482.5 L704.5 481.5 L705.5 480.5 L706.5 478.5 L707.5 476.5 L708.5 474.5 L709.5 471.5 L710.5 468.5 L711.5 465.5 L712.5 463.5 L713.5 461.5 L714.5 460.5 L715.5 458.5 L716.5 457.5 L718.5 456.5 L719.5 456.5 L719.5 456.5 L720.5 456.5 L722.5 456.5 L723.5 456.5 L724.5 456.5 L725.5 457.5 L726.5 457.5 L727.5 458.5 L728.5 458.5 L729.5 458.5 L730.5 459.5 L731.5 460.5 L732.5 460.5 L733.5 461.5 L734.5 462.5 L735.5 463.5 L736.5 464.5 L737.5 465.5 L738.5 466.5 L740.5 468.5 L741.5 469.5 L742.5 470.5 L743.5 472.5 L744.5 473.5 L745.5 474.5 L746.5 475.5 L748.5 476.5 L748.5 477.5 L749.5 478.5 L750.5 479.5 L751.5 480.5 L752.5 480.5 L753.5 481.5 L754.5 481.5 L756.5 481.5 L757.5 481.5 L758.5 480.5 L759.5 479.5 L760.5 478.5 L761.5 476.5 L762.5 474.5 L763.5 472.5 L764.5 470.5 L765.5 468.5 L766.5 466.5 L767.5 465.5 L768.5 463.5 L769.5 462.5 L770.5 460.5 L771.5 458.5 L772.5 457.5 L774.5 455.5 L774.5 454.5 L775.5 453.5 L776.5 453.5 L778.5 454.5 L779.5 455.5 L780.5 457.5 L781.5 459.5 L782.5 461.5 L783.5 463.5 L784.5 465.5 L785.5 468.5 L786.5 470.5 L787.5 473.5 L788.5 475.5 L789.5 477.5 L790.5 479.5 L791.5 479.5 L792.5 479.5 L793.5 478.5 L794.5 477.5 L795.5 476.5 L796.5 474.5 L797.5 471.5 L799.5 469.5 L800.5 467.5 L801.5 466.5 L802.5 464.5 L803.5 461.5 L804.5 459.5 L805.5 457.5 L806.5 454.5 L807.5 452.5 L808.5 450.5 L809.5 449.5 L810.5 447.5 L811.5 447.5 L812.5 446.5 L813.5 447.5 L814.5 450.5 L815.5 453.5 L816.5 456.5 L817.5 458.5 L818.5 462.5 L819.5 465.5 L820.5 469.5 L821.5 473.5 L823.5 476.5 L824.5 479.5 L825.5 482.5 L826.5 483.5 L827.5 483.5 L828.5 483.5 L829.5 482.5 L830.5 480.5 L831.5 478.5 L832.5 476.5 L833.5 474.5 L834.5 472.5 L835.5 471.5 L836.5 470.5 L837.5 468.5 L838.5 467.5 L839.5 466.5 L840.5 465.5 L841.5 464.5 L842.5 462.5 L843.5 461.5 L844.5 461.5 L845.5 460.5 L846.5 459.5 L847.5 459.5 L848.5 458.5 L849.5 458.5 L850.5 457.5 L851.5 457.5 L852.5 456.5 L854.5 456.5 L855.5 456.5 L856.5 456.5 L857.5 456.5 L858.5 456.5 L859.5 457.5 L860.5 458.5 L861.5 458.5 L862.5 459.5 L863.5 460.5 L864.5 461.5 L865.5 462.5 L866.5 463.5 L867.5 464.5 L868.5 465.5 L869.5 465.5 L870.5 466.5 L871.5 467.5 L872.5 467.5 L873.5 466.5 L874.5 464.5 L875.5 463.5 L876.5 462.5 L877.5 460.5 L878.5 458.5 L879.5 456.5 L880.5 453.5 L881.5 451.5 L882.5 449.5 L883.5 447.5 L884.5 445.5 L886.5 443.5 L886.5 442.5 L887.5 441.5 L889.5 441.5 L890.5 442.5 L891.5 443.5 L892.5 445.5 L893.5 447.5 L894.5 449.5 L895.5 451.5 L896.5 453.5 L897.5 454.5 L898.5 455.5 L899.5 456.5 L900.5 456.5 L901.5 457.5 L902.5 458.5 L903.5 458.5 L905.5 459.5 L906.5 459.5 L907.5 460.5 L907.5 460.5 L908.5 461.5" stroke="#0a5a0a" stroke-width="1.4" fill="none" opacity="1" stroke-linejoin="round"/>
</g>
<rect x="259" y="541" width="649" height="2" fill="#fbe09a"/>
<rect x="259" y="546" width="324" height="2" fill="#fbe09a"/>
<rect x="582" y="541" width="2" height="7" fill="#fbe09a"/>
<rect x="583" y="546" width="325" height="1" fill="#fbe09a"/><rect x="583" y="547" width="325" height="1" fill="#d4108a"/>
</svg>
<div class="a" style="left:172px;top:161px;width:86px;height:118px;border-left:1px solid #c8c8c8"></div>
<div class="a" style="left:172px;top:283px;width:86px;height:119px;border-left:1px solid #c8c8c8"></div>
<div class="a" style="left:172px;top:406px;width:86px;height:119px;border-left:1px solid #c8c8c8"></div>
<div class="a" style="left:172px;top:529px;width:86px;height:118px;border-left:1px solid #c8c8c8"></div>
<div class="a" style="left:176px;top:164px;width:14px;height:14px;background:linear-gradient(#f6f6f6,#e4e4e4);border:1px solid #adadad;"></div>
<svg style="left:176px;top:164px" width="14" height="14"><path d="M2.5 5.0 h9 l-4.5 5z" fill="#000"/></svg>
<div class="a" style="left:176px;top:246px;width:14px;height:14px;background:linear-gradient(#f6f6f6,#e4e4e4);border:1px solid #adadad;"></div>
<svg style="left:176px;top:246px" width="14" height="14"><path d="M3 7h8M7 3v8" stroke="#000" stroke-width="2"/></svg>
<div class="a" style="left:176px;top:262px;width:14px;height:14px;background:linear-gradient(#f6f6f6,#e4e4e4);border:1px solid #adadad;"></div>
<svg style="left:176px;top:262px" width="14" height="14"><path d="M3 7h8" stroke="#000" stroke-width="2"/></svg>
<div class="a" style="left:176px;top:286px;width:14px;height:14px;background:linear-gradient(#f6f6f6,#e4e4e4);border:1px solid #adadad;"></div>
<svg style="left:176px;top:286px" width="14" height="14"><path d="M2.5 5.0 h9 l-4.5 5z" fill="#000"/></svg>
<div class="a" style="left:176px;top:369px;width:14px;height:14px;background:linear-gradient(#f6f6f6,#e4e4e4);border:1px solid #adadad;"></div>
<svg style="left:176px;top:369px" width="14" height="14"><path d="M3 7h8M7 3v8" stroke="#000" stroke-width="2"/></svg>
<div class="a" style="left:176px;top:385px;width:14px;height:14px;background:linear-gradient(#f6f6f6,#e4e4e4);border:1px solid #adadad;"></div>
<svg style="left:176px;top:385px" width="14" height="14"><path d="M3 7h8" stroke="#000" stroke-width="2"/></svg>
<div class="a" style="left:176px;top:409px;width:14px;height:14px;background:linear-gradient(#f6f6f6,#e4e4e4);border:1px solid #adadad;"></div>
<svg style="left:176px;top:409px" width="14" height="14"><path d="M2.5 5.0 h9 l-4.5 5z" fill="#000"/></svg>
<div class="a" style="left:176px;top:491px;width:14px;height:14px;background:linear-gradient(#f6f6f6,#e4e4e4);border:1px solid #adadad;"></div>
<svg style="left:176px;top:491px" width="14" height="14"><path d="M3 7h8M7 3v8" stroke="#000" stroke-width="2"/></svg>
<div class="a" style="left:176px;top:507px;width:14px;height:14px;background:linear-gradient(#f6f6f6,#e4e4e4);border:1px solid #adadad;"></div>
<svg style="left:176px;top:507px" width="14" height="14"><path d="M3 7h8" stroke="#000" stroke-width="2"/></svg>
<div class="a" style="left:176px;top:532px;width:14px;height:14px;background:linear-gradient(#f6f6f6,#e4e4e4);border:1px solid #adadad;"></div>
<svg style="left:176px;top:532px" width="14" height="14"><path d="M2.5 5.0 h9 l-4.5 5z" fill="#000"/></svg>
<div class="a" style="left:176px;top:614px;width:14px;height:14px;background:linear-gradient(#f6f6f6,#e4e4e4);border:1px solid #adadad;"></div>
<svg style="left:176px;top:614px" width="14" height="14"><path d="M3 7h8M7 3v8" stroke="#000" stroke-width="2"/></svg>
<div class="a" style="left:176px;top:630px;width:14px;height:14px;background:linear-gradient(#f6f6f6,#e4e4e4);border:1px solid #adadad;"></div>
<svg style="left:176px;top:630px" width="14" height="14"><path d="M3 7h8" stroke="#000" stroke-width="2"/></svg>
<div class="t" style="left:152px;top:208px;width:60px;text-align:center;font-size:11px;transform:rotate(-90deg)">lux</div>
<div class="t" style="left:152px;top:328px;width:60px;text-align:center;font-size:10px;transform:rotate(-90deg)">V</div>
<div class="t" style="left:152px;top:450px;width:60px;text-align:center;font-size:11px;transform:rotate(-90deg)">µV</div>
<div class="t" style="left:152px;top:575px;width:60px;text-align:center;font-size:10px;transform:rotate(-90deg)">BPM</div>
<div class="t" style="left:226px;top:303px;font-size:11px">10.0</div>
<div class="t" style="left:222px;top:372px;font-size:11px">-10.0</div>
<div class="a" style="left:172px;top:646px;width:86px;height:1px;background:#c8c8c8"></div>
<div class="t" style="left:200px;top:488px;width:50px;text-align:right;font-size:11px">0</div>
<div class="t" style="left:200px;top:538px;width:50px;text-align:right;font-size:11px">60</div>
<div class="a" style="left:253px;top:544px;width:4px;height:1px;background:#404040"></div>
<div class="t" style="left:200px;top:571px;width:50px;text-align:right;font-size:11px">40</div>
<div class="a" style="left:253px;top:577px;width:4px;height:1px;background:#404040"></div>
<div class="t" style="left:200px;top:604px;width:50px;text-align:right;font-size:11px">20</div>
<div class="a" style="left:253px;top:610px;width:4px;height:1px;background:#404040"></div>
<div class="t" style="left:200px;top:637px;width:50px;text-align:right;font-size:11px">0</div>
<div class="a" style="left:253px;top:643px;width:4px;height:1px;background:#404040"></div>
<div class="a" style="left:253px;top:494px;width:4px;height:1px;background:#404040"></div>
<div class="t" style="left:293.0px;top:658px;width:60px;text-align:center;font-size:11px">-0.4</div>
<div class="t" style="left:423.0px;top:658px;width:60px;text-align:center;font-size:11px">-0.2</div>
<div class="t" style="left:553px;top:658px;width:60px;text-align:center;font-size:11px">0</div>
<div class="t" style="left:683.0px;top:658px;width:60px;text-align:center;font-size:11px">0.2</div>
<div class="t" style="left:813.0px;top:658px;width:60px;text-align:center;font-size:11px">0.4</div>
<div class="t" style="left:209px;top:661px;font-size:10px;font-weight:bold">M</div>
<svg style="left:208px;top:670px" width="12" height="7"><path d="M1 0 H11 L6 6Z" fill="#000"/></svg>
<svg style="left:262px;top:674px" width="10" height="12"><path d="M7 2 L3 6 L7 10" stroke="#c0c0c0" stroke-width="1.5" fill="none"/></svg>
<svg style="left:743px;top:674px" width="10" height="12"><path d="M3 2 L7 6 L3 10" stroke="#c0c0c0" stroke-width="1.5" fill="none"/></svg>
<div class="a" style="left:755px;top:671px;width:33px;height:18px;background:linear-gradient(#f4f4f4,#e0e0e0);border:1px solid #aaa"></div>
<div class="a" style="left:791px;top:671px;width:24px;height:18px;background:linear-gradient(#f4f4f4,#e0e0e0);border:1px solid #aaa"></div>
<div class="a" style="left:817px;top:671px;width:16px;height:18px;background:linear-gradient(#f4f4f4,#e0e0e0);border:1px solid #aaa"></div>
<div class="a" style="left:835px;top:671px;width:54px;height:18px;background:linear-gradient(#f4f4f4,#e0e0e0);border:1px solid #aaa"></div>
<div class="a" style="left:891px;top:671px;width:16px;height:18px;background:linear-gradient(#f4f4f4,#e0e0e0);border:1px solid #aaa"></div>
<svg style="left:755px;top:671px" width="33" height="18"><rect x="5" y="4" width="13" height="10" fill="#d8e6f6" stroke="#333" stroke-width=".8"/><path d="M6 7h11M6 11h11" stroke="#333" stroke-dasharray="1.5 1" stroke-width=".8"/><path d="M7 9 L10 9 L11 7 L12 11 L13 9 H16" stroke="#2a7a7a" stroke-width=".8" fill="none"/><path d="M19 9h4" stroke="#000" stroke-width="2"/><path d="M22 6 L25 9 L22 12Z" fill="#000"/><path d="M28 2V16" stroke="#000" stroke-width="2"/></svg>
<svg style="left:791px;top:671px" width="24" height="18"><path d="M10 3 L4 9 L10 15Z" fill="#5cc040"/><path d="M14 3 L20 9 L14 15Z" fill="#5cc040"/><path d="M3 13V16H21V13" stroke="#444" fill="none"/></svg>
<svg style="left:817px;top:671px" width="16" height="18"><path d="M2 12 L6 7 L9 9 L11 7 L14 12Z" fill="#000"/></svg>
<div class="t" style="left:854px;top:675px;font-size:12px">1 s</div>
<svg style="left:891px;top:671px" width="16" height="18"><path d="M2 16 L7 4 L9 9 L11 7 L14 16Z" fill="#000"/></svg>
<div class="a" style="left:882px;top:135px;width:22px;height:19px;background:#fff;border:1px solid #5a5a5a"></div>
<svg style="left:882px;top:135px" width="22" height="19"><rect x="2" y="2" width="18" height="15" fill="#e4e4e4"/><path d="M2 17 L20 2 V17Z" fill="#3a3a3a"/><g fill="#111"><rect x="8" y="14" width="2" height="2"/><rect x="12" y="14" width="2" height="2"/><rect x="16" y="14" width="2" height="2"/><rect x="12" y="10" width="2" height="2"/><rect x="16" y="10" width="2" height="2"/><rect x="16" y="6" width="2" height="2"/></g><g fill="#c8c8c8"><rect x="4" y="4" width="2" height="2"/><rect x="8" y="4" width="2" height="2"/><rect x="4" y="8" width="2" height="2"/></g><path d="M3 4 C5 12,8 14,11 8 S16 2,19 7" stroke="#5aa84a" stroke-width="1.2" fill="none"/><path d="M3 6 C6 14,9 12,12 6" stroke="#8ac87a" stroke-width=".8" fill="none"/><path d="M4 15 L8 12 L11 10 L14 6 L17 10 L20 11" stroke="#e07a10" stroke-width="1.3" fill="none"/></svg>
<div class="a" style="left:915px;top:136px;width:16px;height:16px;background:linear-gradient(#f6f6f6,#e4e4e4);border:1px solid #adadad;"></div>
<svg style="left:915px;top:136px" width="16" height="16"><path d="M3.5 6.0 h9 l-4.5 5z" fill="#000"/></svg>
<div class="t" style="left:935px;top:140px;font-size:11.5px;letter-spacing:-0.3px">1k /s</div>
<div class="a" style="left:911px;top:161px;width:133px;height:1px;background:#c8c8c8"></div>
<div class="a" style="left:915px;top:166px;width:15px;height:15px;background:linear-gradient(#f6f6f6,#e4e4e4);border:1px solid #adadad;"></div>
<svg style="left:915px;top:166px" width="15" height="15"><path d="M3.0 5.5 h9 l-4.5 5z" fill="#000"/></svg>
<div class="t" style="left:935px;top:169px;font-size:11.5px;letter-spacing:-0.6px">20 mV</div>
<svg style="left:1023px;top:168px" width="14" height="14"><defs><radialGradient id="ig161" cx=".45" cy=".3" r=".75"><stop offset="0" stop-color="#8cc4f8"/><stop offset=".55" stop-color="#2a78d8"/><stop offset="1" stop-color="#0a3c98"/></radialGradient></defs><circle cx="7" cy="7" r="6.8" fill="url(#ig161)"/><path d="M5.6 6 H8.2 V10.6 H9 V11.5 H5.3 V10.6 H6.1 V6.9 H5.6Z" fill="#fff"/><circle cx="7.1" cy="3.9" r="1.25" fill="#fff"/></svg>
<div class="a" style="left:915px;top:187px;width:126px;height:18px;background:linear-gradient(#f4f4f4,#e0e0e0);border:1px solid #acacac"></div>
<svg style="left:917px;top:190px" width="14" height="12"><path d="M0 0H14L0 12Z" fill="#d00000"/><path d="M14 0V12H0Z" fill="#3a8ae0"/><rect x=".5" y=".5" width="13" height="11" fill="none" stroke="#333" stroke-width=".8"/></svg>
<div class="t" style="left:935px;top:191px;font-size:11px">Light</div>
<svg style="left:1027px;top:193px" width="11" height="6"><path d="M0 0H10L5 5Z" fill="#000"/></svg>
<div class="a" style="left:915px;top:288px;width:15px;height:15px;background:linear-gradient(#f6f6f6,#e4e4e4);border:1px solid #adadad;"></div>
<svg style="left:915px;top:288px" width="15" height="15"><path d="M3.0 5.5 h9 l-4.5 5z" fill="#000"/></svg>
<div class="t" style="left:935px;top:291px;font-size:11.5px;letter-spacing:-0.6px">10 V</div>
<svg style="left:1023px;top:290px" width="14" height="14"><defs><radialGradient id="ig283" cx=".45" cy=".3" r=".75"><stop offset="0" stop-color="#9ade80"/><stop offset=".55" stop-color="#3c9a2c"/><stop offset="1" stop-color="#1a5a10"/></radialGradient></defs><circle cx="7" cy="7" r="6.8" fill="url(#ig283)"/><path d="M5.6 6 H8.2 V10.6 H9 V11.5 H5.3 V10.6 H6.1 V6.9 H5.6Z" fill="#fff"/><circle cx="7.1" cy="3.9" r="1.25" fill="#fff"/></svg>
<div class="a" style="left:915px;top:309px;width:126px;height:18px;background:linear-gradient(#f4f4f4,#e0e0e0);border:1px solid #acacac"></div>
<svg style="left:917px;top:312px" width="14" height="12"><path d="M0 0H14L0 12Z" fill="#1020e0"/><path d="M14 0V12H0Z" fill="#d00000"/><rect x=".5" y=".5" width="13" height="11" fill="none" stroke="#333" stroke-width=".8"/></svg>
<div class="t" style="left:935px;top:313px;font-size:11px">Light Detect</div>
<svg style="left:1027px;top:315px" width="11" height="6"><path d="M0 0H10L5 5Z" fill="#000"/></svg>
<div class="a" style="left:915px;top:411px;width:15px;height:15px;background:linear-gradient(#f6f6f6,#e4e4e4);border:1px solid #adadad;"></div>
<svg style="left:915px;top:411px" width="15" height="15"><path d="M3.0 5.5 h9 l-4.5 5z" fill="#000"/></svg>
<div class="t" style="left:935px;top:414px;font-size:11.5px;letter-spacing:-0.6px">2 mV</div>
<svg style="left:1023px;top:413px" width="14" height="14"><defs><radialGradient id="ig406" cx=".45" cy=".3" r=".75"><stop offset="0" stop-color="#8cc4f8"/><stop offset=".55" stop-color="#2a78d8"/><stop offset="1" stop-color="#0a3c98"/></radialGradient></defs><circle cx="7" cy="7" r="6.8" fill="url(#ig406)"/><path d="M5.6 6 H8.2 V10.6 H9 V11.5 H5.3 V10.6 H6.1 V6.9 H5.6Z" fill="#fff"/><circle cx="7.1" cy="3.9" r="1.25" fill="#fff"/></svg>
<div class="a" style="left:915px;top:432px;width:126px;height:18px;background:linear-gradient(#f4f4f4,#e0e0e0);border:1px solid #acacac"></div>
<svg style="left:917px;top:435px" width="14" height="12"><path d="M0 0H14L0 12Z" fill="#107010"/><path d="M14 0V12H0Z" fill="#c01890"/><rect x=".5" y=".5" width="13" height="11" fill="none" stroke="#333" stroke-width=".8"/></svg>
<div class="t" style="left:935px;top:436px;font-size:11px">VEP</div>
<svg style="left:1027px;top:438px" width="11" height="6"><path d="M0 0H10L5 5Z" fill="#000"/></svg>
<div class="a" style="left:915px;top:534px;width:15px;height:15px;background:#f0f0f0;border:1px solid #d4d4d4"></div>
<svg style="left:915px;top:534px" width="15" height="15"><path d="M3.0 5.5 h9 l-4.5 5z" fill="#6a6a6a"/></svg>
<div class="t" style="left:935px;top:537px;font-size:11.5px">Input Off</div>
<svg style="left:1023px;top:536px" width="14" height="14"><defs><radialGradient id="ig529" cx=".45" cy=".3" r=".75"><stop offset="0" stop-color="#9ade80"/><stop offset=".55" stop-color="#3c9a2c"/><stop offset="1" stop-color="#1a5a10"/></radialGradient></defs><circle cx="7" cy="7" r="6.8" fill="url(#ig529)"/><path d="M5.6 6 H8.2 V10.6 H9 V11.5 H5.3 V10.6 H6.1 V6.9 H5.6Z" fill="#fff"/><circle cx="7.1" cy="3.9" r="1.25" fill="#fff"/></svg>
<div class="a" style="left:915px;top:555px;width:126px;height:18px;background:linear-gradient(#f4f4f4,#e0e0e0);border:1px solid #acacac"></div>
<svg style="left:917px;top:558px" width="14" height="12"><path d="M0 0H14L0 12Z" fill="#d0108a"/><path d="M14 0V12H0Z" fill="#a07010"/><rect x=".5" y=".5" width="13" height="11" fill="none" stroke="#333" stroke-width=".8"/></svg>
<div class="t" style="left:935px;top:559px;font-size:11px">Channel 4</div>
<svg style="left:1027px;top:561px" width="11" height="6"><path d="M0 0H10L5 5Z" fill="#000"/></svg>
<div class="a" style="left:909px;top:647px;width:135px;height:1px;background:#d0d0d0"></div>
<div class="a" style="left:913px;top:646px;width:36px;height:38px;background:linear-gradient(#d6e8fa,#b8d6f4);border:1px solid #6ea6e0"></div>
<svg style="left:913px;top:646px" width="36" height="38"><rect x="4" y="5" width="18" height="6" fill="#ccc" stroke="#666" stroke-width=".8"/><path d="M6 8h14" stroke="#444" stroke-dasharray="1 1"/><rect x="6" y="12" width="26" height="21" fill="#eef6fc" stroke="#888" stroke-width=".8"/><path d="M7 16h24M7 29h24" stroke="#111" stroke-dasharray="2 1.5"/><path d="M7 22 L14 22 L16 19 L18 25 L20 22 H31" stroke="#2a8a8a" stroke-width="1.2" fill="none"/><path d="M20 9 C26 8,28 10,28 13" stroke="#fff" stroke-width="2" fill="none"/></svg>
<div class="a" style="left:951px;top:646px;width:84px;height:38px;background:linear-gradient(#f2f2f2,#e4e4e4);border:1px solid #acacac"></div>
<svg style="left:960px;top:657px" width="10" height="16"><path d="M1 1 L9 8 L1 15Z" fill="#58c038" stroke="#3a7a9a" stroke-width=".8"/></svg>
<div class="t" style="left:986px;top:658px;font-size:13px">Start</div>
<svg style="left:1033px;top:680px" width="10" height="9"><path d="M9 1 L1 9 M9 5 L5 9" stroke="#999"/></svg><div class="a" style="left:238px;top:46px;width:347px;height:444px;background:rgba(0,0,0,0.18);filter:blur(1px)"></div>
<div class="a" style="left:237px;top:45px;width:347px;height:443px;background:rgba(0,0,0,0.32)"></div>
<div class="a" style="left:234px;top:42px;width:348px;height:445px;background:#f0f0f0;border:1px solid #979797"></div>
<div class="a" style="left:264px;top:45px;width:1px;height:439px;background:#d9d9d9"></div>
<div class="a" style="left:237px;top:67px;width:342px;height:22px;background:#d5e6f8;border:1px solid #86b9ec"></div>
<div class="t" style="left:269px;top:50px;font-size:12px;letter-spacing:-0.15px">Chart View</div>
<div class="t" style="left:269px;top:72px;font-size:12px;letter-spacing:-0.15px">Scope View</div>
<div class="t" style="left:269px;top:94px;font-size:12px;letter-spacing:-0.15px">Zoom View</div>
<div class="t" style="left:269px;top:116px;font-size:12px;letter-spacing:-0.15px">XY View</div>
<div class="t" style="left:269px;top:138px;font-size:12px;letter-spacing:-0.15px">Comments</div>
<div class="t" style="left:480px;top:138px;width:81px;text-align:right;font-size:12px;letter-spacing:-0.15px">Ctrl+L</div>
<div class="t" style="left:269px;top:160px;font-size:12px;letter-spacing:-0.15px">Notebook</div>
<div class="t" style="left:269px;top:182px;font-size:12px;letter-spacing:-0.15px">Data Pad</div>
<div class="t" style="left:269px;top:204px;font-size:12px;letter-spacing:-0.15px">Spectrum</div>
<div class="t" style="left:269px;top:226px;font-size:12px;letter-spacing:-0.15px">Movie View</div>
<div class="t" style="left:269px;top:248px;font-size:12px;letter-spacing:-0.15px">Analysis Manager</div>
<div class="t" style="left:269px;top:277px;font-size:12px;letter-spacing:-0.15px">DVM</div>
<div class="t" style="left:269px;top:306px;font-size:12px;letter-spacing:-0.15px">Cascade</div>
<div class="t" style="left:269px;top:328px;font-size:12px;letter-spacing:-0.15px">Smart Tile</div>
<div class="t" style="left:480px;top:328px;width:81px;text-align:right;font-size:12px;letter-spacing:-0.15px">Ctrl+T</div>
<div class="t" style="left:269px;top:350px;font-size:12px;letter-spacing:-0.15px">Tile</div>
<div class="t" style="left:269px;top:372px;font-size:12px;letter-spacing:-0.15px">Arrange Icons</div>
<div class="t" style="left:269px;top:394px;font-size:12px;letter-spacing:-0.15px">Tile Miniwindows</div>
<div class="t" style="left:480px;top:394px;width:81px;text-align:right;font-size:12px;letter-spacing:-0.15px">Ctrl+M</div>
<div class="t" style="left:269px;top:416px;font-size:12px;letter-spacing:-0.15px">Close All</div>
<div class="t" style="left:269px;top:445px;font-size:12px;letter-spacing:-0.15px">1 Scope Event Mode Tutorial: Chart View</div>
<div class="t" style="left:269px;top:467px;font-size:12px;letter-spacing:-0.15px">2 Scope Event Mode Tutorial: Scope View</div>
<div class="a" style="left:265px;top:268px;width:314px;height:1px;background:#d7d7d7"></div>
<div class="a" style="left:265px;top:297px;width:314px;height:1px;background:#d7d7d7"></div>
<div class="a" style="left:265px;top:436px;width:314px;height:1px;background:#d7d7d7"></div>
<svg style="left:565px;top:279px" width="6" height="8"><path d="M0 0 L5 4 L0 8Z" fill="#000"/></svg>
<svg style="left:338px;top:70px" width="14" height="22"><path d="M1 1 V17 L5 13 L8 20 L10.5 19 L7.5 12 H13 Z" fill="#fff" stroke="#000" stroke-width="1" stroke-linejoin="round"/></svg></body></html>
